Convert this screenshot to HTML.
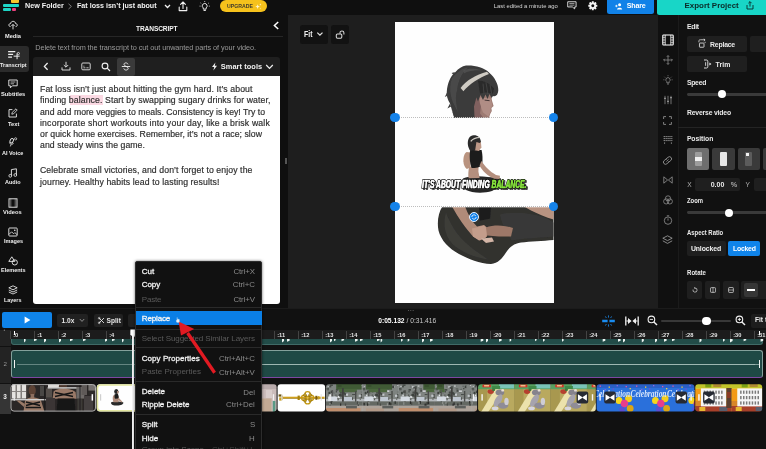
<!DOCTYPE html>
<html><head><meta charset="utf-8">
<style>
*{box-sizing:border-box;margin:0;padding:0}
html,body{width:766px;height:449px;overflow:hidden;background:#0f0f0f;font-family:"Liberation Sans",sans-serif;color:#fff}
.a{position:absolute}
.t{position:absolute;white-space:nowrap;line-height:1}
.b{font-weight:bold}
svg{position:absolute;overflow:visible}
/* sidebar */
.sl{position:absolute;left:0;width:33px;text-align:center;font-size:6.6px;font-weight:bold;color:#eee;line-height:1;letter-spacing:-0.1px}
/* menu */
.mi{position:absolute;left:142px;font-size:8.05px;color:#f2f2f2;line-height:1;white-space:nowrap}
.mk{position:absolute;font-size:7.9px;color:#8a8a8a;line-height:1;white-space:nowrap}
.mi{-webkit-text-stroke:0.28px #f2f2f2}
.dis{color:#5a5a5a;-webkit-text-stroke:0}
.sep{position:absolute;left:136px;width:125px;height:1px;background:#2a2a2a}
.btn{position:absolute;background:#1f1f1f;border-radius:2px}
.lab{position:absolute;font-size:6.8px;font-weight:bold;color:#eaeaea;line-height:1;white-space:nowrap}
</style></head><body>
<div id="root" style="position:absolute;left:0;top:0;width:766px;height:449px;overflow:hidden;will-change:transform">
<!-- TOPBAR -->
<div class="a" id="topbar" style="left:0;top:0;width:766px;height:15px;background:#0f0f0f"></div>

<!-- logo -->
<div class="a" style="left:10.5px;top:0;width:8.5px;height:3px;background:#f7c52b;border-radius:0 0 1px 1px"></div>
<div class="a" style="left:3px;top:4.4px;width:16.2px;height:2.9px;background:#1ed6c6;border-radius:1px"></div>
<div class="a" style="left:3px;top:8.4px;width:7.5px;height:2.4px;background:#1ed6c6;border-radius:1px"></div>
<div class="a" style="left:11.6px;top:8.4px;width:4.6px;height:2.4px;background:#f0407f;border-radius:1px"></div>
<div class="t b" id="nf" style="left:24.8px;top:1.7px;font-size:7.8px;color:#f3f3f3;transform-origin:0 0;transform:scaleX(0.921)">New Folder</div>
<svg style="left:67px;top:3px" width="6" height="7" viewBox="0 0 6 7"><path d="M1.5 0.8 L4.4 3.4 L1.5 6" fill="none" stroke="#8a8a8a" stroke-width="0.9"/></svg>
<div class="t b" id="ft" style="left:77.4px;top:1.7px;font-size:7.8px;color:#f3f3f3;transform-origin:0 0;transform:scaleX(0.914)">Fat loss isn’t just about</div>
<svg style="left:164.3px;top:4.2px" width="7" height="5" viewBox="0 0 7 5"><path d="M1 1 L3.5 3.5 L6 1" fill="none" stroke="#f0f0f0" stroke-width="1.3"/></svg>
<!-- upload icon -->
<svg style="left:178.4px;top:0.5px" width="10" height="12" viewBox="0 0 10 12"><path d="M5 7.5 V1.2 M2.6 3.4 L5 1 L7.4 3.4 M1.2 6 V9.6 H8.8 V6" fill="none" stroke="#f0f0f0" stroke-width="1.1" stroke-linejoin="round" stroke-linecap="round"/></svg>
<!-- bulb -->
<svg style="left:199px;top:0.8px" width="11.4" height="11.4" viewBox="0 0 12 12"><path d="M6 2.6 a2.6 2.6 0 0 1 1.5 4.7 V8.6 H4.5 V7.3 A2.6 2.6 0 0 1 6 2.6 Z M4.8 10 H7.2" fill="none" stroke="#f0f0f0" stroke-width="1"/><path d="M6 0 V1 M1.6 2 L2.4 2.7 M10.4 2 L9.6 2.7 M0.6 5.4 H1.6 M10.4 5.4 H11.4" stroke="#f0f0f0" stroke-width="0.8"/></svg>
<!-- upgrade -->
<div class="a" style="left:220px;top:0.3px;width:47.4px;height:11.8px;background:#f6c21c;border-radius:6px"></div>
<div class="t b" id="upg" style="left:227px;top:3.9px;font-size:5.2px;color:#3f3a2c;letter-spacing:0">UPGRADE</div>
<svg style="left:255.4px;top:3px" width="7" height="7" viewBox="0 0 9 9"><path d="M3.4 1.6 L4.2 3.8 L6.4 4.6 L4.2 5.4 L3.4 7.6 L2.6 5.4 L0.4 4.6 L2.6 3.8 Z" fill="#fff6d0"/><path d="M6.8 0.4 L7.2 1.5 L8.3 1.9 L7.2 2.3 L6.8 3.4 L6.4 2.3 L5.3 1.9 L6.4 1.5 Z" fill="#fff6d0"/><path d="M6.9 5.8 L7.2 6.6 L8 6.9 L7.2 7.2 L6.9 8 L6.6 7.2 L5.8 6.9 L6.6 6.6 Z" fill="#fff6d0"/></svg>
<!-- right side -->
<div class="t" id="le" style="left:493.8px;top:4.00px;font-size:5.85px;color:#d8d8d8">Last edited a minute ago</div>
<svg style="left:566.6px;top:1.4px" width="9.8" height="9" viewBox="0 0 11 10"><path d="M0.8 0.8 H10.2 V6.6 H8.6 V8.8 L6 6.6 H0.8 Z" fill="none" stroke="#e8e8e8" stroke-width="1"/><path d="M2.6 2.8 H8.4 M2.6 4.6 H8.4" stroke="#e8e8e8" stroke-width="0.7"/></svg>
<svg style="left:588.4px;top:1.3px" width="9.6" height="9.6" viewBox="-4.8 -4.8 9.6 9.6"><g fill="#f4f4f4"><circle r="3.3"/><rect x="-1" y="-4.5" width="2" height="9" rx="0.3"/><rect x="-1" y="-4.5" width="2" height="9" rx="0.3" transform="rotate(45)"/><rect x="-1" y="-4.5" width="2" height="9" rx="0.3" transform="rotate(90)"/><rect x="-1" y="-4.5" width="2" height="9" rx="0.3" transform="rotate(135)"/></g><circle r="1.5" fill="#0f0f0f"/></svg>
<div class="a" style="left:607px;top:-4px;width:47px;height:18.3px;background:#1182e8;border-radius:2.5px"></div>
<svg style="left:615px;top:3px" width="8" height="7" viewBox="0 0 8 7"><circle cx="4.6" cy="1.8" r="1.5" fill="#fff"/><path d="M2 6.4 C2 4.2 7.2 4.2 7.2 6.4 Z" fill="#fff"/><path d="M0.2 3 H2.6 M1.4 1.8 V4.2" stroke="#fff" stroke-width="0.8"/></svg>
<div class="t b" id="sh" style="left:626.8px;top:2.6px;font-size:7.1px;letter-spacing:-0.2px;color:#fff">Share</div>
<div class="a" style="left:657px;top:-4px;width:113px;height:18.5px;background:#18d6c7;border-radius:2.5px"></div>
<div class="t b" id="ex" style="left:684.5px;top:1.8px;font-size:7.95px;color:#0a2a28">Export Project</div>
<svg style="left:746px;top:1px" width="8" height="9" viewBox="0 0 8 9"><path d="M4 5.6 V0.8 M2.4 2.2 L4 0.6 L5.6 2.2 M1 4 V8 H7 V4" fill="none" stroke="#0a2a28" stroke-width="0.9"/></svg>
<!-- LEFT SIDEBAR -->
<div class="a" id="sidebar" style="left:0;top:15px;width:33px;height:293px;background:#0f0f0f"></div>

<div class="a" style="left:0;top:45.6px;width:29px;height:26px;background:#2b2b2b;border-radius:0 3px 3px 0"></div>
<div class="t b" id="s1" style="left:5.0px;top:33.15px;font-size:6.2px;color:#eee;transform-origin:0 0;transform:scaleX(0.909)">Media</div>
<div class="t b" id="s2" style="left:-0.3px;top:61.8px;font-size:6.2px;color:#eee;transform-origin:0 0;transform:scaleX(0.890)">Transcript</div>
<div class="t b" id="s3" style="left:0.8px;top:91.2px;font-size:6.2px;color:#eee;transform-origin:0 0;transform:scaleX(0.931)">Subtitles</div>
<div class="t b" id="s4" style="left:7.5px;top:121.10px;font-size:6.2px;color:#eee;transform-origin:0 0;transform:scaleX(0.919)">Text</div>
<div class="t b" id="s5" style="left:2.0px;top:149.8px;font-size:6.2px;color:#eee;transform-origin:0 0;transform:scaleX(0.888)">AI Voice</div>
<div class="t b" id="s6" style="left:5.0px;top:179.2px;font-size:6.2px;color:#eee;transform-origin:0 0;transform:scaleX(0.886)">Audio</div>
<div class="t b" id="s7" style="left:3.3px;top:208.6px;font-size:6.2px;color:#eee;transform-origin:0 0;transform:scaleX(0.926)">Videos</div>
<div class="t b" id="s8" style="left:3.5px;top:238px;font-size:6.2px;color:#eee;transform-origin:0 0;transform:scaleX(0.892)">Images</div>
<div class="t b" id="s9" style="left:0.5px;top:267.4px;font-size:6.2px;color:#eee;transform-origin:0 0;transform:scaleX(0.891)">Elements</div>
<div class="t b" id="s10" style="left:4.0px;top:296.8px;font-size:6.2px;color:#eee;transform-origin:0 0;transform:scaleX(0.875)">Layers</div>
<!-- sidebar icons -->
<svg style="left:8px;top:20px" width="10" height="10" viewBox="0 0 10 10"><path d="M2.6 6.6 C0.2 6.6 0.4 3.4 2.6 3.6 C2.8 0.6 7.4 0.6 7.6 3.6 C9.8 3.6 9.8 6.6 7.6 6.6 M5 9.4 V4.6 M3.4 6 L5 4.4 L6.6 6" fill="none" stroke="#eee" stroke-width="0.9"/></svg>
<svg style="left:7.4px;top:49.6px" width="14.4" height="11" viewBox="0 0 12 10"><path d="M0.5 1.5 H7 M0.5 4 H5 M0.5 6.5 H4" stroke="#eee" stroke-width="1"/><path d="M5.5 5.6 H11 M8.6 3.2 V8.4" stroke="#eee" stroke-width="0.9"/><circle cx="9.8" cy="3.2" r="1" fill="none" stroke="#eee" stroke-width="0.7"/></svg>
<svg style="left:8px;top:79px" width="10" height="10" viewBox="0 0 10 10"><path d="M0.8 1 H9.2 V6.8 H4.4 L2.4 8.8 V6.8 H0.8 Z" fill="none" stroke="#eee" stroke-width="0.9"/><path d="M2.6 3 H7.4 M2.6 4.8 H6" stroke="#eee" stroke-width="0.7"/></svg>
<svg style="left:8px;top:108px" width="10" height="10" viewBox="0 0 10 10"><path d="M4.4 1.6 H1 V9 H8.4 V5.6" fill="none" stroke="#eee" stroke-width="0.9"/><path d="M3.8 6.2 L4.2 4.4 L8 0.8 L9.2 2 L5.6 5.8 Z" fill="none" stroke="#eee" stroke-width="0.8"/></svg>
<svg style="left:8px;top:137px" width="10" height="10" viewBox="0 0 10 10"><rect x="2.2" y="1.4" width="3" height="4.6" rx="1.5" transform="rotate(25 3.7 3.7)" fill="none" stroke="#eee" stroke-width="0.9"/><path d="M1.4 5.4 C1.8 7.8 4.8 7.8 5.6 6 M3 7.6 L2.4 9.4" fill="none" stroke="#eee" stroke-width="0.8"/><circle cx="7.6" cy="1.8" r="1.1" fill="none" stroke="#eee" stroke-width="0.7"/></svg>
<svg style="left:8px;top:167.7px" width="10" height="10" viewBox="0 0 10 10"><path d="M3.4 7.6 V1.6 L8.4 0.8 V6.8" fill="none" stroke="#eee" stroke-width="0.9"/><circle cx="2.3" cy="7.8" r="1.4" fill="none" stroke="#eee" stroke-width="0.8"/><circle cx="7.3" cy="7" r="1.4" fill="none" stroke="#eee" stroke-width="0.8"/></svg>
<svg style="left:8px;top:197.5px" width="10" height="10" viewBox="0 0 10 10"><rect x="1" y="0.8" width="8" height="8.4" fill="none" stroke="#eee" stroke-width="0.9"/><path d="M2.8 0.8 V9.2 M7.2 0.8 V9.2" stroke="#eee" stroke-width="0.45"/></svg>
<svg style="left:8px;top:226.5px" width="10" height="10" viewBox="0 0 10 10"><rect x="0.8" y="1" width="8.4" height="8" rx="0.8" fill="none" stroke="#eee" stroke-width="0.9"/><path d="M1 7.4 L3.6 4.8 L5.6 6.8 L6.8 5.6 L9 7.6" fill="none" stroke="#eee" stroke-width="0.8"/><circle cx="6.8" cy="3.2" r="0.8" fill="#eee"/></svg>
<svg style="left:8px;top:255.5px" width="11" height="10" viewBox="0 0 11 10"><path d="M3.8 0.8 L6.8 5.4 H0.8 Z" fill="none" stroke="#eee" stroke-width="0.9" stroke-linejoin="round"/><circle cx="6.8" cy="6.4" r="2.6" fill="none" stroke="#eee" stroke-width="0.9"/></svg>
<svg style="left:8px;top:285px" width="10" height="10" viewBox="0 0 10 10"><path d="M5 0.8 L9.2 2.8 L5 4.8 L0.8 2.8 Z M0.8 5 L5 7 L9.2 5 M0.8 7 L5 9 L9.2 7" fill="none" stroke="#eee" stroke-width="0.85" stroke-linejoin="round"/></svg>
<!-- TRANSCRIPT PANEL -->
<div class="a" id="tpanel" style="left:33px;top:15px;width:255px;height:293px;background:#0f0f0f"></div>

<div class="t b" id="trh" style="left:136.0px;letter-spacing:-0.100px;top:26.20px;font-size:6.6px;color:#f2f2f2">TRANSCRIPT</div>
<svg style="left:272px;top:21px" width="8" height="9" viewBox="0 0 8 9"><path d="M6.2 1 L2.4 4.5 L6.2 8" fill="none" stroke="#fff" stroke-width="1.5"/></svg>
<div class="a" style="left:33px;top:35.8px;width:250px;height:1px;background:#262626"></div>
<div class="t" id="del" style="left:35.2px;letter-spacing:-0.065px;top:44px;font-size:7.3px;color:#9a9a9a">Delete text from the transcript to cut out unwanted parts of your video.</div>
<div class="a" style="left:33px;top:57px;width:247px;height:20px;background:#1f1f1f;border-radius:3px 3px 0 0"></div>
<div class="a" style="left:116.5px;top:58px;width:18.5px;height:17.5px;background:#3a3a3a;border-radius:2px"></div>
<svg style="left:43px;top:62px" width="6" height="9" viewBox="0 0 6 9"><path d="M4.6 1 L1.4 4.4 L4.6 7.8" fill="none" stroke="#f0f0f0" stroke-width="1.3"/></svg>
<svg style="left:61px;top:61px" width="10" height="10" viewBox="0 0 10 10"><path d="M5 0.8 V6 M2.8 4 L5 6.2 L7.2 4 M1 6.4 V9 H9 V6.4" fill="none" stroke="#e6e6e6" stroke-width="0.9"/></svg>
<svg style="left:81px;top:62px" width="10" height="9" viewBox="0 0 10 9"><rect x="0.8" y="1" width="8.4" height="6.8" rx="1" fill="none" stroke="#e6e6e6" stroke-width="0.9"/><path d="M2.4 5.8 H4.4 M5.4 5.8 H7.6 M2.4 4.2 H3.4" stroke="#e6e6e6" stroke-width="0.8"/></svg>
<svg style="left:101px;top:61.5px" width="10" height="10" viewBox="0 0 10 10"><circle cx="4" cy="4" r="2.9" fill="none" stroke="#f0f0f0" stroke-width="1.1"/><path d="M6.2 6.2 L9 9" stroke="#f0f0f0" stroke-width="1.2"/></svg>
<svg style="left:121px;top:62px" width="10" height="9" viewBox="0 0 10 9"><path d="M7 2.4 C6.6 0.4 3 0.4 3 2.4 C3 4.4 7.2 4.4 7.2 6.4 C7.2 8.6 3 8.6 2.8 6.4" fill="none" stroke="#f0f0f0" stroke-width="0.9"/><path d="M0.8 4.5 H9.2" stroke="#f0f0f0" stroke-width="0.9"/></svg>
<svg style="left:211px;top:62px" width="7" height="9" viewBox="0 0 7 9"><path d="M4.4 0.4 L1 5 H3.2 L2.4 8.6 L6 3.8 H3.8 Z" fill="#f0f0f0"/></svg>
<div class="t b" id="smt" style="left:220.8px;letter-spacing:0.068px;top:63.40px;font-size:7.4px;color:#f2f2f2">Smart tools</div>
<svg style="left:264.5px;top:63.5px" width="9" height="6" viewBox="0 0 9 6"><path d="M1.2 1 L4.5 4.4 L7.8 1" fill="none" stroke="#f0f0f0" stroke-width="1.2"/></svg>
<div class="a" style="left:33px;top:76px;width:247px;height:227.5px;background:#fff;border-radius:0 0 3px 3px"></div>
<div class="a" style="left:69.6px;top:94.7px;width:33px;height:10.7px;background:#fbd9e3"></div>
<div class="t" id="l1" style="left:40.0px;letter-spacing:0.095px;top:84.90px;font-size:8.7px;color:#2e2e2e;-webkit-text-stroke:0.18px #2e2e2e">Fat loss isn’t just about hitting the gym hard. It’s about</div>
<div class="t" id="l2" style="left:40.0px;letter-spacing:0.101px;top:96.20px;font-size:8.7px;color:#2e2e2e;-webkit-text-stroke:0.18px #2e2e2e">finding balance. Start by swapping sugary drinks for water,</div>
<div class="t" id="l3" style="left:40.0px;letter-spacing:0.008px;top:107.50px;font-size:8.7px;color:#2e2e2e;-webkit-text-stroke:0.18px #2e2e2e">and add more veggies to meals. Consistency is key! Try to</div>
<div class="t" id="l4" style="left:40.0px;letter-spacing:0.177px;top:118.80px;font-size:8.7px;color:#2e2e2e;-webkit-text-stroke:0.18px #2e2e2e">incorporate short workouts into your day, like a brisk walk</div>
<div class="t" id="l5" style="left:40.0px;letter-spacing:0.044px;top:130.10px;font-size:8.7px;color:#2e2e2e;-webkit-text-stroke:0.18px #2e2e2e">or quick home exercises. Remember, it’s not a race; slow</div>
<div class="t" id="l6" style="left:40.0px;letter-spacing:0.066px;top:141.40px;font-size:8.7px;color:#2e2e2e;-webkit-text-stroke:0.18px #2e2e2e">and steady wins the game.</div>
<div class="t" id="l7" style="left:40.0px;letter-spacing:0.095px;top:166.00px;font-size:8.7px;color:#2e2e2e;-webkit-text-stroke:0.18px #2e2e2e">Celebrate small victories, and don’t forget to enjoy the</div>
<div class="t" id="l8" style="left:40.0px;letter-spacing:0.111px;top:177.60px;font-size:8.7px;color:#2e2e2e;-webkit-text-stroke:0.18px #2e2e2e">journey. Healthy habits lead to lasting results!</div>

<!-- resizer -->
<div class="a" style="left:284.5px;top:158px;width:1px;height:6px;background:#555"></div>
<div class="a" style="left:286px;top:158px;width:1px;height:6px;background:#555"></div>
<!-- CANVAS AREA -->
<div class="a" id="canvasbg" style="left:288px;top:15.4px;width:370px;height:292.6px;background:#1e1e1e"></div>

<div class="a" style="left:299.5px;top:25px;width:28.5px;height:18.5px;background:#121212;border-radius:2.5px"></div>
<div class="t b" id="fit" style="left:303.9px;top:29.6px;font-size:8.7px;color:#f2f2f2;transform-origin:0 0;transform:scaleX(0.8)">Fit</div>
<svg style="left:316px;top:31px" width="8" height="6" viewBox="0 0 8 6"><path d="M1.3 1.6 L3.9 4.2 L6.5 1.6" fill="none" stroke="#e4e4e4" stroke-width="1.25"/></svg>
<div class="a" style="left:330.8px;top:25px;width:18.7px;height:18.5px;background:#121212;border-radius:2.5px"></div>
<svg style="left:335px;top:29px" width="11" height="11" viewBox="335 29 11 11"><rect x="336.3" y="33.9" width="5.5" height="4.3" rx="1.1" fill="none" stroke="#d8d8d8" stroke-width="1.05"/><path d="M340 33.8 V32.6 C340 30.5 343.9 30.5 343.9 32.7 V34.4" fill="none" stroke="#d8d8d8" stroke-width="1.05"/></svg>
<!-- white canvas -->
<div class="a" id="cv" style="left:395px;top:21.5px;width:158.5px;height:281px;background:#fefefe;overflow:hidden">
<svg style="left:0;top:0" width="158.5" height="281" viewBox="395 21.5 158.5 281">
<defs><filter id="bl1" x="-20%" y="-20%" width="140%" height="140%"><feGaussianBlur stdDeviation="0.7"/></filter><filter id="bl2" x="-20%" y="-20%" width="140%" height="140%"><feGaussianBlur stdDeviation="0.45"/></filter></defs>
<g id="bigfig" filter="url(#bl1)">
<!-- face -->
<path d="M471 88 L491.4 93 L491.8 99.4 L493.6 105.4 L491.4 107.4 L491.8 110.6 L490.2 113.6 L488.8 118 L468 118 Z" fill="#9d7a72"/>
<path d="M480 97 L490.6 98 L492.4 105 L490.6 108 L490.8 111 L488.4 116 L483 112 L480 104 Z" fill="#b08d85"/>
<path d="M470 100 L478 97 L481 106 L480 113 L484 118 L468 118 Z" fill="#77595a" opacity="0.75"/>
<path d="M484.6 99.6 L489.6 100.2" stroke="#3a2c2c" stroke-width="0.9"/>
<!-- hair -->
<path d="M466 65 C474 64.5 484 66.5 489 72 C495 77 498.5 84 498.3 90 C498 94 496 96.5 493 95.5 L491.5 97.5 L489.5 93.5 L487.5 98.5 L485.5 94 L483 99.5 L480.5 94.5 L478 101 L476.4 97 L474 106 L474.6 118 L454.5 118 C453 112 451 107 450 103 C447.5 99 446.3 95 446.8 91 C447.5 83 450 76 455.5 71.5 C458.5 68 462 65.8 466 65 Z" fill="#3b3b3b"/>
<path d="M452 78 C456 72 462 68 468 67 C462 72 458 80 457 90 C455 96 456 104 458 112 L454 104 C450 96 449 86 452 78 Z" fill="#555" opacity="0.55"/>
<path d="M478 80 C484 80 490 83 494 88 L493 93 L486 92 L480 93 Z" fill="#2a2a2a"/>
<path d="M450 103 L447.4 108 L451 106 L452.6 113 L455 108 L456 118 L454.5 118 Z" fill="#3b3b3b"/><path d="M447 92 L444.8 96.4 L448 95 Z M455 71.6 L451.6 72.6 L453.6 74.6 Z" fill="#444"/><path d="M463 70 C468 67.5 476 67.5 482 70 C476 69.4 468 70.4 464 73 Z" fill="#565656" opacity="0.7"/><path d="M486 82 L488 94 M483 83 L484 93 M490 84 L491.6 93" stroke="#555" stroke-width="0.7" opacity="0.8"/>
<!-- headband -->
<path d="M460.6 87.5 C466 80 476 74 487 71.2 L489 73.6 C479 77.5 469.6 83.4 463.4 90.8 Z" fill="#cfcbc3"/>
<!-- legs -->
<path d="M442.4 206 L553.5 206 L553.5 239.5 C543 240.5 530 241 521 242 C514 243 510 246 506 252 C502 258 498 263 491 263.5 C480 263.5 468 258 459 253.5 C449 248 441 240 438.5 230 C436.8 221 438.5 212 442.4 206 Z" fill="#30302e"/>
<path d="M446 212 C443 222 444 234 452 243 C460 251 474 257 488 259 C478 252 466 244 458 234 C452 226 448 218 446 212 Z" fill="#454541" opacity="0.6"/>
<path d="M500 214 C512 211 530 212 545 217 L553.5 222 L553.5 236 C540 237 522 238 512 240 C506 233 502 224 500 214 Z" fill="#3c3c39" opacity="0.8"/>
<!-- waist -->
<path d="M479 206 L491 206 L490 218 L480 220 Z" fill="#1c1c1c"/>
<!-- left arm -->
<path d="M452 206 L465 206 C468 214 472 221 477 226 L484 224.5 L488 228 L487 236 L480 240 L473 236 C466 228 458 217 452 206 Z" fill="#b08b79"/>
<path d="M472 228 L484 225 L488 229 L486 237 L479 240 L473 236 Z" fill="#c39d8b"/>
<!-- foot -->
<path d="M486 227 C494 224 504 224.5 513 227.5 L511 236 C503 236 494 236 487 235 Z" fill="#9d7867"/>
<path d="M481 238 L492 237 L494 241 L486 242.5 Z" fill="#d3b5a6"/>
<!-- right arm -->
<path d="M524 206 L553.5 206 L553.5 219 C546 217 538 213 531 210 Z" fill="#b89381"/>
</g>
<rect x="395" y="117.4" width="158.5" height="89.4" fill="#fefefe"/>
<g id="smallfig" filter="url(#bl2)">
<path d="M463 178 C468 175.6 478 175 488 176.4 L500.6 177.6 C501.4 182 498.6 187.4 492 190.6 C484 193 471.6 192.6 466 189.6 C461.8 186.4 461.4 181.6 463 178 Z" fill="#262626"/>
<path d="M469.2 166 L478.6 166 L478.4 171 L479.6 177.4 L468.6 177.8 C468 174 468.4 170 469.2 166 Z" fill="#b48f7e"/>
<path d="M466.6 151.4 C464 153 463.2 157 463.4 161 C463.6 164.4 465 167 466.8 168.4 L470.4 167 L470.6 152 Z" fill="#b9937f"/>
<path d="M470.2 149.6 L481.6 149.6 C482.6 154 482.8 159 482.2 163.4 C481 166.2 477.6 167.6 471.6 167.4 C469.6 162.6 469.2 155 470.2 149.6 Z" fill="#1f1f1f"/>
<path d="M481.4 160.6 C485 166 490 171.4 496 174.4 L500 175.2 L499.6 178.4 L494.4 178.2 C487.6 175.6 482 170 479.6 165 Z" fill="#b48f7e"/>
<path d="M474.6 140.6 L480.8 140.8 L481.4 146.8 L479 150.4 L474.6 149.8 Z" fill="#bd9887"/>
<path d="M473.5 134.8 C477.5 134.5 480.8 137 480.9 141.5 L479.6 142.6 L476.4 141.6 L475.2 149.6 L470.5 150.6 C467.8 147 466.8 141.5 469 137.5 C470.2 135.8 471.8 135 473.5 134.8 Z" fill="#2a2a2a"/>
<path d="M470.4 140.2 C472.6 137.6 476 136.2 479.6 136.4 L480 137.6 C476.6 137.6 473.4 138.8 471 141.4 Z" fill="#cfcbc3"/>
</g>
</svg>
</div>
<!-- selection box -->
<div class="a" style="left:395px;top:117px;width:158.5px;height:0;border-top:1px dotted #bdbdbd"></div>
<div class="a" style="left:395px;top:206.3px;width:158.5px;height:0;border-top:1px dotted #bdbdbd"></div>
<div class="a" style="left:390.4px;top:112.8px;width:9.2px;height:9.2px;border-radius:50%;background:#1583ea"></div>
<div class="a" style="left:548.9px;top:112.8px;width:9.2px;height:9.2px;border-radius:50%;background:#1583ea"></div>
<div class="a" style="left:390.4px;top:202.1px;width:9.2px;height:9.2px;border-radius:50%;background:#1583ea"></div>
<div class="a" style="left:548.9px;top:202.1px;width:9.2px;height:9.2px;border-radius:50%;background:#1583ea"></div>
<div class="a" style="left:468.9px;top:212.2px;width:10.2px;height:10.2px;border-radius:50%;background:#1583ea;border:1px solid #e8f2ff"></div>
<svg style="left:471px;top:214.3px" width="6" height="6" viewBox="0 0 6 6"><path d="M0.8 3 A2.2 2.2 0 0 1 4.8 1.8 M5.2 3 A2.2 2.2 0 0 1 1.2 4.2" fill="none" stroke="#fff" stroke-width="0.8"/></svg>
<!-- caption -->
<svg id="cap" style="left:415px;top:170px" width="120" height="30" viewBox="415 170 120 30" font-family="Liberation Sans, sans-serif" font-weight="bold" font-style="italic" font-size="10.4">
<text x="423.4" y="189.2" textLength="104.5" lengthAdjust="spacingAndGlyphs" fill="#2a2a2a" stroke="#2a2a2a" stroke-width="2" stroke-linejoin="round" opacity="0.85">IT’S ABOUT FINDING BALANCE.</text>
<text x="422" y="188" textLength="104.5" lengthAdjust="spacingAndGlyphs" fill="#fff" stroke="#0c0c0c" stroke-width="2.2" stroke-linejoin="round" paint-order="stroke">IT’S ABOUT FINDING <tspan fill="#86e23c">BALANCE.</tspan></text>
<text x="422" y="188" textLength="104.5" lengthAdjust="spacingAndGlyphs" fill="#fff" stroke="#fff" stroke-width="0.35">IT’S ABOUT FINDING <tspan fill="#86e23c" stroke="#86e23c">BALANCE.</tspan></text>
</svg>
<!-- RIGHT ICON COLUMN -->
<div class="a" id="ricons" style="left:658px;top:15px;width:20px;height:293px;background:#101010"></div>

<!-- right icon column icons -->
<svg style="left:661.5px;top:34px" width="12" height="12" viewBox="0 0 12 12"><rect x="0.8" y="1" width="10.4" height="10" rx="0.8" fill="none" stroke="#fff" stroke-width="1.1"/><path d="M3.2 1 V11 M8.8 1 V11" stroke="#fff" stroke-width="0.8"/><path d="M0.8 3.4 H3.2 M0.8 6 H3.2 M0.8 8.6 H3.2 M8.8 3.4 H11.2 M8.8 6 H11.2 M8.8 8.6 H11.2" stroke="#fff" stroke-width="0.6"/></svg>
<svg style="left:662.5px;top:55px" width="10" height="10" viewBox="0 0 10 10"><path d="M5 0.6 V9.4 M0.6 5 H9.4 M3.8 1.8 L5 0.6 L6.2 1.8 M3.8 8.2 L5 9.4 L6.2 8.2 M1.8 3.8 L0.6 5 L1.8 6.2 M8.2 3.8 L9.4 5 L8.2 6.2" fill="none" stroke="#8c8c8c" stroke-width="0.8"/></svg>
<svg style="left:662.5px;top:75px" width="10" height="10" viewBox="0 0 10 10"><path d="M5 2.6 a2.2 2.2 0 0 1 1.2 4 V7.8 H3.8 V6.6 A2.2 2.2 0 0 1 5 2.6 Z M4 9 H6" fill="none" stroke="#8c8c8c" stroke-width="0.8"/><path d="M5 0.2 V1.2 M1.4 1.8 L2.1 2.5 M8.6 1.8 L7.9 2.5 M0.4 4.8 H1.4 M8.6 4.8 H9.6" stroke="#8c8c8c" stroke-width="0.7"/></svg>
<svg style="left:662.5px;top:95px" width="10" height="10" viewBox="0 0 10 10"><path d="M2 0.8 V9.2 M5 0.8 V9.2 M8 0.8 V9.2" stroke="#8c8c8c" stroke-width="0.8"/><path d="M1 3.4 H3 M4 6.4 H6 M7 2.6 H9" stroke="#8c8c8c" stroke-width="1.2"/></svg>
<svg style="left:663px;top:115.5px" width="9" height="9" viewBox="0 0 9 9"><path d="M0.6 3 V0.6 H3 M6 0.6 H8.4 V3 M8.4 6 V8.4 H6 M3 8.4 H0.6 V6" fill="none" stroke="#8c8c8c" stroke-width="0.9"/></svg>
<svg style="left:662.5px;top:135px" width="10" height="10" viewBox="0 0 10 10"><path d="M0.6 1.6 H9.4 M0.6 3.6 H9.4 M0.6 5.6 H9.4 M1.6 7.4 V9 M8.4 7.4 V9" stroke="#8c8c8c" stroke-width="1" stroke-dasharray="1.4 0.5"/></svg>
<svg style="left:662px;top:154.5px" width="11" height="11" viewBox="0 0 11 11"><rect x="0.8" y="3.4" width="9.4" height="4.2" rx="2.1" transform="rotate(-40 5.5 5.5)" fill="none" stroke="#8c8c8c" stroke-width="0.9"/><path d="M4.2 4.2 L6.8 6.8 M4.2 6.8 L6.8 4.2" stroke="#8c8c8c" stroke-width="0.6"/></svg>
<svg style="left:662.5px;top:175px" width="10" height="10" viewBox="0 0 10 10"><path d="M0.8 1.8 L4.6 5 L0.8 8.2 Z M9.2 1.8 L5.4 5 L9.2 8.2 Z" fill="none" stroke="#8c8c8c" stroke-width="0.85" stroke-linejoin="round"/></svg>
<svg style="left:662.5px;top:194.5px" width="10" height="10" viewBox="0 0 10 10"><circle cx="5" cy="3.4" r="2.6" fill="none" stroke="#8c8c8c" stroke-width="0.8"/><circle cx="3.2" cy="6.4" r="2.6" fill="none" stroke="#8c8c8c" stroke-width="0.8"/><circle cx="6.8" cy="6.4" r="2.6" fill="none" stroke="#8c8c8c" stroke-width="0.8"/></svg>
<svg style="left:662.5px;top:214.5px" width="10" height="10" viewBox="0 0 10 10"><circle cx="5" cy="5.6" r="3.7" fill="none" stroke="#8c8c8c" stroke-width="0.85"/><path d="M5 5.6 V3.4 M3.8 0.8 H6.2" stroke="#8c8c8c" stroke-width="0.85"/></svg>
<svg style="left:662px;top:234.5px" width="11" height="10" viewBox="0 0 11 10"><path d="M5.5 0.8 L10.2 3.2 L5.5 5.6 L0.8 3.2 Z M0.8 5.8 L5.5 8.4 L10.2 5.8" fill="none" stroke="#9a9a9a" stroke-width="0.85" stroke-linejoin="round"/></svg>
<!-- RIGHT PANEL -->
<div class="a" id="rpanel" style="left:678px;top:15px;width:88px;height:293px;background:#111;border-left:1px solid #1b1b1b"></div>

<div class="lab" id="r1" style="left:686.9px;letter-spacing:-0.211px;top:23.90px">Edit</div>
<div class="btn" style="left:687px;top:36.2px;width:60px;height:16px"></div>
<div class="btn" style="left:750px;top:36.2px;width:20px;height:16px"></div>
<svg style="left:697.6px;top:39.4px" width="8.2" height="9.2" viewBox="0 0 9 10"><rect x="1.6" y="4.4" width="5" height="4.6" rx="0.6" fill="none" stroke="#eee" stroke-width="0.9"/><path d="M1 3.6 V2 C1 0.8 2 0.8 3 0.8 H7.6 M6.4 -0.2 L7.8 0.9 L6.4 2.2 M7.8 3 V4.4" fill="none" stroke="#eee" stroke-width="0.8"/></svg>
<div class="lab" id="r2" style="left:710.1px;letter-spacing:-0.220px;top:42.10px;font-size:6.9px">Replace</div>
<div class="btn" style="left:687px;top:56.2px;width:60px;height:16px"></div>
<svg style="left:703px;top:59.4px" width="9" height="10" viewBox="0 0 9 10"><path d="M1 1 H3.4 C4.4 1 4.8 1.6 4.8 2.4 V7.6 C4.8 8.4 4.4 9 3.4 9 H1" fill="none" stroke="#eee" stroke-width="0.9"/><path d="M2.6 3.2 V6.8" stroke="#eee" stroke-width="0.8"/><path d="M6.4 3.4 L8.4 5 L6.4 6.6 Z" fill="#eee"/></svg>
<div class="lab" id="r3" style="left:715.5px;letter-spacing:0.084px;top:62.10px;font-size:6.9px">Trim</div>
<div class="lab" id="r4" style="left:686.9px;letter-spacing:-0.241px;top:79.90px">Speed</div>
<div class="a" style="left:687px;top:92.9px;width:80px;height:2.8px;background:#3a3a3a;border-radius:1.4px"></div>
<div class="a" style="left:717.9px;top:90.2px;width:8px;height:8px;border-radius:50%;background:#fff"></div>
<div class="lab" id="r5" style="left:686.9px;letter-spacing:-0.155px;top:109.80px">Reverse video</div>
<div class="a" style="left:678px;top:126.5px;width:88px;height:1px;background:#242424"></div>
<div class="lab" id="r6" style="left:686.9px;letter-spacing:-0.052px;top:135.90px">Position</div>
<div class="btn" style="left:687px;top:148px;width:22.2px;height:22px;background:#6e6e6e"></div>
<div class="a" style="left:694.6px;top:151.8px;width:7px;height:14.4px;background:#9c9c9c;border-radius:1px"></div>
<div class="a" style="left:694.6px;top:156.6px;width:7px;height:4.6px;background:#f0f0f0"></div>
<div class="btn" style="left:712.2px;top:148px;width:22.5px;height:22px;background:#3a3a3a"></div>
<div class="a" style="left:720px;top:152px;width:7px;height:14px;background:#e8e8e8;border-radius:1px"></div>
<div class="btn" style="left:737.6px;top:148px;width:22.5px;height:22px;background:#3a3a3a"></div>
<div class="a" style="left:745.2px;top:152px;width:7px;height:14px;background:#5c5c5c;border-radius:1px"></div>
<div class="a" style="left:746px;top:153.4px;width:3px;height:3px;background:#f0f0f0"></div>
<div class="btn" style="left:763px;top:148px;width:10px;height:22px;background:#3a3a3a"></div>
<div class="lab" id="r7" style="left:687.2px;letter-spacing:-0.706px;top:181.50px;font-size:6.6px;font-weight:normal;color:#b0b0b0">X</div>
<div class="btn" style="left:695px;top:177.5px;width:44.6px;height:13.4px;background:#1f1f1f"></div>
<div class="lab" id="r8" style="left:710.7px;letter-spacing:-0.006px;top:180.6px;font-size:7px">0.00</div>
<div class="lab" id="r9" style="left:730.8px;letter-spacing:-0.006px;top:180.7px;font-size:7.2px;font-weight:bold;color:#a8a8a8">%</div>
<div class="lab" id="r10" style="left:745.4px;letter-spacing:-0.906px;top:181.50px;font-size:6.6px;font-weight:normal;color:#b0b0b0">Y</div>
<div class="btn" style="left:754px;top:177.5px;width:20px;height:13.4px;background:#1f1f1f"></div>
<div class="lab" id="r11" style="left:686.9px;top:198.00px;transform-origin:0 0;transform:scaleX(0.865)">Zoom</div>
<div class="a" style="left:687px;top:211.4px;width:80px;height:2.8px;background:#3a3a3a;border-radius:1.4px"></div>
<div class="a" style="left:725.4px;top:208.8px;width:8px;height:8px;border-radius:50%;background:#fff"></div>
<div class="lab" id="r12" style="left:686.9px;top:230.20px;transform-origin:0 0;transform:scaleX(0.870)">Aspect Ratio</div>
<div class="btn" style="left:687px;top:241px;width:39.3px;height:15.4px"></div>
<div class="lab" id="r13" style="left:690.9px;letter-spacing:-0.102px;top:246.20px;font-size:6.9px;font-weight:bold;color:#f0f0f0">Unlocked</div>
<div class="btn" style="left:728.2px;top:241px;width:32.2px;height:15.4px;background:#0f84ea"></div>
<div class="lab" id="r14" style="left:733.1px;letter-spacing:-0.271px;top:246.20px;font-size:6.9px;font-weight:bold;color:#fff">Locked</div>
<div class="lab" id="r15" style="left:686.9px;top:269.60px;transform-origin:0 0;transform:scaleX(0.896)">Rotate</div>
<div class="btn" style="left:687px;top:280.8px;width:15.4px;height:18px"></div>
<div class="btn" style="left:705px;top:280.8px;width:15.4px;height:18px"></div>
<div class="btn" style="left:723px;top:280.8px;width:15.6px;height:18px"></div>
<div class="btn" style="left:741px;top:280.8px;width:30px;height:18px"></div>
<div class="a" style="left:744px;top:283.2px;width:14px;height:13.4px;background:#363636;border-radius:2px"></div>
<div class="a" style="left:746.8px;top:289px;width:8.4px;height:1.8px;background:#fff"></div>
<svg style="left:691.8px;top:286.8px" width="6" height="6" viewBox="0 0 7 7"><path d="M3.5 1.2 A2.4 2.4 0 1 1 1.2 3" fill="none" stroke="#ddd" stroke-width="0.8"/><path d="M2.4 0.2 L3.8 1.2 L2.6 2.4" fill="none" stroke="#ddd" stroke-width="0.7"/></svg>
<svg style="left:709.7px;top:286.8px" width="6" height="6" viewBox="0 0 7 7"><rect x="0.6" y="0.8" width="5.8" height="5.4" rx="0.6" fill="none" stroke="#ddd" stroke-width="0.8"/><path d="M3.5 0 V7" stroke="#ddd" stroke-width="0.7"/></svg>
<svg style="left:727.8px;top:286.8px" width="6" height="6" viewBox="0 0 7 7"><rect x="0.8" y="0.6" width="5.4" height="5.8" rx="0.6" fill="none" stroke="#ddd" stroke-width="0.8"/><path d="M0 3.5 H7" stroke="#ddd" stroke-width="0.7"/></svg>
<!-- TIMELINE -->
<div class="a" id="timeline" style="left:0;top:308px;width:766px;height:141px;background:#111;border-top:1px solid #1b1b1b"></div>

<div class="a" style="left:407.6px;top:309.6px;width:1.3px;height:1.3px;background:#6e6e6e;border-radius:50%;box-shadow:2.3px 0 #6e6e6e,4.6px 0 #6e6e6e"></div>
<!-- toolbar -->
<div class="a" style="left:2.3px;top:312px;width:49.5px;height:16.4px;background:#0f84ea;border-radius:2px"></div>
<svg style="left:24px;top:316.4px" width="7" height="8" viewBox="0 0 7 8"><path d="M0.6 0.4 L6.4 4 L0.6 7.6 Z" fill="#fff"/></svg>
<div class="btn" style="left:57.4px;top:314.2px;width:30.8px;height:13px;background:#212121"></div>
<div class="t b" id="spd" style="left:61.6px;top:318.40px;font-size:6.6px;color:#e6e6e6">1.0x</div>
<svg style="left:78.6px;top:318.4px" width="6" height="5" viewBox="0 0 6 5"><path d="M0.8 1 L3 3.4 L5.2 1" fill="none" stroke="#aaa" stroke-width="0.8"/></svg>
<div class="btn" style="left:94px;top:314.2px;width:28.6px;height:13px;background:#212121"></div>
<svg style="left:97.6px;top:317.2px" width="7" height="7" viewBox="0 0 7 7"><path d="M1 1 L6 6 M6 1 L1 6" stroke="#e6e6e6" stroke-width="0.9"/><circle cx="1.2" cy="1.2" r="0.9" fill="none" stroke="#e6e6e6" stroke-width="0.6"/><circle cx="1.2" cy="5.8" r="0.9" fill="none" stroke="#e6e6e6" stroke-width="0.6"/></svg>
<div class="t b" id="spl" style="left:106.6px;top:318.40px;font-size:6.6px;color:#e6e6e6">Split</div>
<div class="btn" style="left:128px;top:314.2px;width:28px;height:13px;background:#212121"></div>
<div class="t b" id="tm1" style="left:378.2px;top:317.6px;font-size:6.7px;color:#fff">0:05.132</div>
<div class="t" id="tm2" style="left:406.5px;top:317.6px;font-size:6.7px;color:#c8c8c8">/ 0:31.416</div>
<!-- snap icon -->
<svg style="left:601.5px;top:315px" width="13" height="12" viewBox="0 0 13 12"><path d="M0.2 6 H5.6 M7.4 6 H12.8" stroke="#1a8cf0" stroke-width="2.4"/><path d="M6.5 0.4 V2.6 M6.5 9.4 V11.6 M3.4 1.4 L4.4 3 M9.6 1.4 L8.6 3 M3.4 10.6 L4.4 9 M9.6 10.6 L8.6 9" stroke="#1a8cf0" stroke-width="0.8"/></svg>
<svg style="left:624.5px;top:316px" width="14" height="10" viewBox="0 0 14 10"><path d="M0.8 0.6 V9.4 M13.2 0.6 V9.4" stroke="#f0f0f0" stroke-width="1.3"/><path d="M1.4 5 H4 M10 5 H12.6" stroke="#f0f0f0" stroke-width="1.1"/><path d="M3 2 L6.6 5 L3 8 Z M11 2 L7.4 5 L11 8 Z" fill="#f0f0f0"/></svg>
<svg style="left:647.4px;top:315.4px" width="11" height="11" viewBox="0 0 11 11"><circle cx="4.4" cy="4.4" r="3.3" fill="none" stroke="#f0f0f0" stroke-width="1.1"/><path d="M6.9 6.9 L10 10" stroke="#f0f0f0" stroke-width="1.4"/><path d="M2.8 4.4 H6" stroke="#f0f0f0" stroke-width="0.9"/></svg>
<div class="a" style="left:660.5px;top:319.5px;width:70.5px;height:2.8px;background:#383838;border-radius:1.4px"></div>
<div class="a" style="left:702.2px;top:316.6px;width:8.6px;height:8.6px;border-radius:50%;background:#fff"></div>
<svg style="left:735.4px;top:315.4px" width="11" height="11" viewBox="0 0 11 11"><circle cx="4.4" cy="4.4" r="3.3" fill="none" stroke="#f0f0f0" stroke-width="1.1"/><path d="M6.9 6.9 L10 10" stroke="#f0f0f0" stroke-width="1.4"/><path d="M2.8 4.4 H6 M4.4 2.8 V6" stroke="#f0f0f0" stroke-width="0.9"/></svg>
<div class="btn" style="left:751px;top:313.6px;width:20px;height:14px;background:#1d1d1d"></div>
<div class="t b" id="fitt" style="left:755px;top:317.4px;font-size:6.6px;color:#eee">Fit t</div>
<!-- track column -->
<div class="a" style="left:0;top:330px;width:10.5px;height:16px;background:#232323"></div>
<div class="a" style="left:0;top:347px;width:10.5px;height:36px;background:#232323"></div>
<div class="a" style="left:0;top:384px;width:10.5px;height:29.5px;background:#353535"></div>
<div class="t" style="left:3.4px;top:361.2px;font-size:6.2px;color:#999">2</div>
<div class="t b" style="left:3.2px;top:394.2px;font-size:6.4px;color:#eee">3</div>
<div class="t" style="left:3.6px;top:328.4px;font-size:5px;color:#777">•</div>
<!-- ruler bg -->
<div class="a" style="left:10.5px;top:330px;width:755.5px;height:8px;background:#1f1f1f"></div>
<!-- track1 -->
<div class="a" style="left:10.8px;top:336px;width:752.4px;height:9px;background:#224c48;border:1px solid #3f6a66;border-top:none;border-radius:0 0 3px 3px"></div>
<div class="a" style="left:10.5px;top:330px;width:755.5px;height:8.6px;background:#1c1c1c"></div>
<div class="a" style="left:10.3px;top:330.6px;width:1px;height:8px;background:#444"></div><div class="t" style="left:13.2px;top:332.8px;font-size:5.7px;font-weight:bold;color:#e4e4e4">:0</div>
<div class="a" style="left:34.3px;top:330.6px;width:1px;height:8px;background:#444"></div><div class="t" style="left:37.2px;top:332.8px;font-size:5.7px;font-weight:bold;color:#e4e4e4">:1</div>
<div class="a" style="left:58.3px;top:330.6px;width:1px;height:8px;background:#444"></div><div class="t" style="left:61.2px;top:332.8px;font-size:5.7px;font-weight:bold;color:#e4e4e4">:2</div>
<div class="a" style="left:82.3px;top:330.6px;width:1px;height:8px;background:#444"></div><div class="t" style="left:85.2px;top:332.8px;font-size:5.7px;font-weight:bold;color:#e4e4e4">:3</div>
<div class="a" style="left:106.3px;top:330.6px;width:1px;height:8px;background:#444"></div><div class="t" style="left:109.2px;top:332.8px;font-size:5.7px;font-weight:bold;color:#e4e4e4">:4</div>
<div class="a" style="left:130.3px;top:330.6px;width:1px;height:8px;background:#444"></div><div class="t" style="left:133.2px;top:332.8px;font-size:5.7px;font-weight:bold;color:#e4e4e4">:5</div>
<div class="a" style="left:154.3px;top:330.6px;width:1px;height:8px;background:#444"></div><div class="t" style="left:157.2px;top:332.8px;font-size:5.7px;font-weight:bold;color:#e4e4e4">:6</div>
<div class="a" style="left:178.3px;top:330.6px;width:1px;height:8px;background:#444"></div><div class="t" style="left:181.2px;top:332.8px;font-size:5.7px;font-weight:bold;color:#e4e4e4">:7</div>
<div class="a" style="left:202.3px;top:330.6px;width:1px;height:8px;background:#444"></div><div class="t" style="left:205.2px;top:332.8px;font-size:5.7px;font-weight:bold;color:#e4e4e4">:8</div>
<div class="a" style="left:226.3px;top:330.6px;width:1px;height:8px;background:#444"></div><div class="t" style="left:229.2px;top:332.8px;font-size:5.7px;font-weight:bold;color:#e4e4e4">:9</div>
<div class="a" style="left:250.3px;top:330.6px;width:1px;height:8px;background:#444"></div><div class="t" style="left:253.2px;top:332.8px;font-size:5.7px;font-weight:bold;color:#e4e4e4">:10</div>
<div class="a" style="left:274.3px;top:330.6px;width:1px;height:8px;background:#444"></div><div class="t" style="left:277.2px;top:332.8px;font-size:5.7px;font-weight:bold;color:#e4e4e4">:11</div>
<div class="a" style="left:298.3px;top:330.6px;width:1px;height:8px;background:#444"></div><div class="t" style="left:301.2px;top:332.8px;font-size:5.7px;font-weight:bold;color:#e4e4e4">:12</div>
<div class="a" style="left:322.3px;top:330.6px;width:1px;height:8px;background:#444"></div><div class="t" style="left:325.2px;top:332.8px;font-size:5.7px;font-weight:bold;color:#e4e4e4">:13</div>
<div class="a" style="left:346.3px;top:330.6px;width:1px;height:8px;background:#444"></div><div class="t" style="left:349.2px;top:332.8px;font-size:5.7px;font-weight:bold;color:#e4e4e4">:14</div>
<div class="a" style="left:370.3px;top:330.6px;width:1px;height:8px;background:#444"></div><div class="t" style="left:373.2px;top:332.8px;font-size:5.7px;font-weight:bold;color:#e4e4e4">:15</div>
<div class="a" style="left:394.3px;top:330.6px;width:1px;height:8px;background:#444"></div><div class="t" style="left:397.2px;top:332.8px;font-size:5.7px;font-weight:bold;color:#e4e4e4">:16</div>
<div class="a" style="left:418.3px;top:330.6px;width:1px;height:8px;background:#444"></div><div class="t" style="left:421.2px;top:332.8px;font-size:5.7px;font-weight:bold;color:#e4e4e4">:17</div>
<div class="a" style="left:442.3px;top:330.6px;width:1px;height:8px;background:#444"></div><div class="t" style="left:445.2px;top:332.8px;font-size:5.7px;font-weight:bold;color:#e4e4e4">:18</div>
<div class="a" style="left:466.3px;top:330.6px;width:1px;height:8px;background:#444"></div><div class="t" style="left:469.2px;top:332.8px;font-size:5.7px;font-weight:bold;color:#e4e4e4">:19</div>
<div class="a" style="left:490.3px;top:330.6px;width:1px;height:8px;background:#444"></div><div class="t" style="left:493.2px;top:332.8px;font-size:5.7px;font-weight:bold;color:#e4e4e4">:20</div>
<div class="a" style="left:514.3px;top:330.6px;width:1px;height:8px;background:#444"></div><div class="t" style="left:517.2px;top:332.8px;font-size:5.7px;font-weight:bold;color:#e4e4e4">:21</div>
<div class="a" style="left:538.3px;top:330.6px;width:1px;height:8px;background:#444"></div><div class="t" style="left:541.2px;top:332.8px;font-size:5.7px;font-weight:bold;color:#e4e4e4">:22</div>
<div class="a" style="left:562.3px;top:330.6px;width:1px;height:8px;background:#444"></div><div class="t" style="left:565.2px;top:332.8px;font-size:5.7px;font-weight:bold;color:#e4e4e4">:23</div>
<div class="a" style="left:586.3px;top:330.6px;width:1px;height:8px;background:#444"></div><div class="t" style="left:589.2px;top:332.8px;font-size:5.7px;font-weight:bold;color:#e4e4e4">:24</div>
<div class="a" style="left:610.3px;top:330.6px;width:1px;height:8px;background:#444"></div><div class="t" style="left:613.2px;top:332.8px;font-size:5.7px;font-weight:bold;color:#e4e4e4">:25</div>
<div class="a" style="left:634.3px;top:330.6px;width:1px;height:8px;background:#444"></div><div class="t" style="left:637.2px;top:332.8px;font-size:5.7px;font-weight:bold;color:#e4e4e4">:26</div>
<div class="a" style="left:658.3px;top:330.6px;width:1px;height:8px;background:#444"></div><div class="t" style="left:661.2px;top:332.8px;font-size:5.7px;font-weight:bold;color:#e4e4e4">:27</div>
<div class="a" style="left:682.3px;top:330.6px;width:1px;height:8px;background:#444"></div><div class="t" style="left:685.2px;top:332.8px;font-size:5.7px;font-weight:bold;color:#e4e4e4">:28</div>
<div class="a" style="left:706.3px;top:330.6px;width:1px;height:8px;background:#444"></div><div class="t" style="left:709.2px;top:332.8px;font-size:5.7px;font-weight:bold;color:#e4e4e4">:29</div>
<div class="a" style="left:730.3px;top:330.6px;width:1px;height:8px;background:#444"></div><div class="t" style="left:733.2px;top:332.8px;font-size:5.7px;font-weight:bold;color:#e4e4e4">:30</div>
<div class="a" style="left:754.3px;top:330.6px;width:1px;height:8px;background:#444"></div><div class="t" style="left:757.2px;top:332.8px;font-size:5.7px;font-weight:bold;color:#e4e4e4">:31</div>


<svg style="left:0;top:338.6px" width="766" height="6" viewBox="0 338 766 6"><path d="M24.0 338 H25.6 V340.0 L24.0 341.4 Z" fill="#eef4f2"/><path d="M34.0 338 H36.6 V339.3 L34.0 340.2 Z" fill="#eef4f2"/><path d="M44.0 338 H46.0 V340.0 L44.0 341.4 Z" fill="#eef4f2"/><path d="M59.0 338 H61.0 V340.0 L59.0 341.4 Z" fill="#eef4f2"/><path d="M70.0 338 H72.6 V339.3 L70.0 340.2 Z" fill="#eef4f2"/><path d="M83.0 338 H85.6 V339.3 L83.0 340.2 Z" fill="#eef4f2"/><path d="M105.0 338 H107.0 V339.7 L105.0 340.8 Z" fill="#eef4f2"/><path d="M112.0 338 H114.6 V339.3 L112.0 340.2 Z" fill="#eef4f2"/><path d="M122.0 338 H123.6 V340.0 L122.0 341.4 Z" fill="#eef4f2"/><path d="M282.0 338 H284.0 V340.0 L282.0 341.4 Z" fill="#eef4f2"/><path d="M287.0 338 H289.6 V339.7 L287.0 340.8 Z" fill="#eef4f2"/><path d="M330.0 338 H332.0 V340.0 L330.0 341.4 Z" fill="#eef4f2"/><path d="M334.0 338 H335.6 V339.3 L334.0 340.2 Z" fill="#eef4f2"/><path d="M341.5 338 H344.1 V339.3 L341.5 340.2 Z" fill="#eef4f2"/><path d="M355.0 338 H357.6 V339.7 L355.0 340.8 Z" fill="#eef4f2"/><path d="M360.0 338 H362.6 V339.3 L360.0 340.2 Z" fill="#eef4f2"/><path d="M377.0 338 H379.6 V339.3 L377.0 340.2 Z" fill="#eef4f2"/><path d="M380.6 338 H382.2 V340.0 L380.6 341.4 Z" fill="#eef4f2"/><path d="M401.0 338 H402.6 V339.7 L401.0 340.8 Z" fill="#eef4f2"/><path d="M407.7 338 H409.3 V339.7 L407.7 340.8 Z" fill="#eef4f2"/><path d="M422.0 338 H424.0 V340.0 L422.0 341.4 Z" fill="#eef4f2"/><path d="M430.0 338 H432.6 V339.7 L430.0 340.8 Z" fill="#eef4f2"/><path d="M480.7 338 H483.3 V339.7 L480.7 340.8 Z" fill="#eef4f2"/><path d="M486.0 338 H488.0 V340.0 L486.0 341.4 Z" fill="#eef4f2"/><path d="M499.0 338 H501.6 V339.7 L499.0 340.8 Z" fill="#eef4f2"/><path d="M509.6 338 H511.2 V339.7 L509.6 340.8 Z" fill="#eef4f2"/><path d="M535.0 338 H536.6 V339.3 L535.0 340.2 Z" fill="#eef4f2"/><path d="M543.0 338 H544.6 V339.7 L543.0 340.8 Z" fill="#eef4f2"/><path d="M562.0 338 H563.6 V339.7 L562.0 340.8 Z" fill="#eef4f2"/><path d="M602.7 338 H605.3 V339.7 L602.7 340.8 Z" fill="#eef4f2"/><path d="M618.0 338 H620.6 V339.7 L618.0 340.8 Z" fill="#eef4f2"/><path d="M623.0 338 H625.0 V340.0 L623.0 341.4 Z" fill="#eef4f2"/><path d="M641.8 338 H643.8 V340.0 L641.8 341.4 Z" fill="#eef4f2"/><path d="M655.0 338 H657.0 V340.0 L655.0 341.4 Z" fill="#eef4f2"/><path d="M664.0 338 H666.6 V339.7 L664.0 340.8 Z" fill="#eef4f2"/><path d="M672.0 338 H674.6 V339.3 L672.0 340.2 Z" fill="#eef4f2"/><path d="M699.5 338 H701.5 V340.0 L699.5 341.4 Z" fill="#eef4f2"/><path d="M723.0 338 H724.6 V339.7 L723.0 340.8 Z" fill="#eef4f2"/><path d="M730.0 338 H732.6 V340.0 L730.0 341.4 Z" fill="#eef4f2"/><path d="M743.6 338 H746.2 V339.3 L743.6 340.2 Z" fill="#eef4f2"/><path d="M760.6 338 H763.2 V339.7 L760.6 340.8 Z" fill="#eef4f2"/></svg>
<div class="a" style="left:14.1px;top:331px;width:1.2px;height:4px;background:#fff"></div>
<div class="a" style="left:759.2px;top:330.6px;width:1.3px;height:4.4px;background:#fff"></div>
<!-- track2 -->
<div class="a" style="left:10.8px;top:350.2px;width:752.4px;height:27.8px;background:#1f4945;border:1px solid #84a09b;border-bottom:1.6px solid #7e47a2;border-radius:3px"></div>
<div class="a" style="left:17px;top:364px;width:738px;height:1px;background:#a9c2bd;opacity:0.5"></div>
<div class="a" style="left:14px;top:360px;width:1.4px;height:8.4px;background:#f4f4f4"></div>
<div class="a" style="left:262px;top:363.8px;width:497px;height:1.4px;background:#c5d8d4;opacity:0.6"></div>
<div class="a" style="left:758.8px;top:360px;width:1.4px;height:8.4px;background:#f4f4f4"></div>
<!-- track3 clips -->
<svg style="left:0;top:380px" width="766" height="36" viewBox="0 380 766 36"><defs><clipPath id="c1"><rect x="10.6" y="384.2" width="85.3" height="27.3" rx="3"/></clipPath><clipPath id="c2"><rect x="96.8" y="384.2" width="43.2" height="27.3" rx="3"/></clipPath><clipPath id="c3"><rect x="255.0" y="384.2" width="21.6" height="27.3" rx="3"/></clipPath><clipPath id="c4"><rect x="277.6" y="384.2" width="47.5" height="27.3" rx="3"/></clipPath><clipPath id="c5"><rect x="326.0" y="384.2" width="151.1" height="27.3" rx="3"/></clipPath><clipPath id="c6"><rect x="478.1" y="384.2" width="117.7" height="27.3" rx="3"/></clipPath><clipPath id="c7"><rect x="596.6" y="384.2" width="97.8" height="27.3" rx="3"/></clipPath><clipPath id="c8"><rect x="695.3" y="384.2" width="66.9" height="27.3" rx="3"/></clipPath><filter id="tb" x="-5%" y="-20%" width="110%" height="140%"><feGaussianBlur stdDeviation="0.55"/></filter><filter id="tb2" x="-5%" y="-20%" width="110%" height="140%"><feGaussianBlur stdDeviation="0.9"/></filter></defs>
<g clip-path="url(#c1)"><g filter="url(#tb)"><rect x="8.0" y="382.0" width="92.0" height="32.0" fill="#2a2625" /><rect x="12.0" y="384.0" width="14.4" height="14.6" fill="#e4e2df" /><rect x="15.6" y="384.0" width="1.2" height="14.6" fill="#6a6664" /><rect x="20.6" y="384.0" width="1.2" height="14.6" fill="#6a6664" /><rect x="12.0" y="391.0" width="14.0" height="1.0" fill="#8a8684" /><rect x="26.4" y="384.0" width="2.2" height="28.0" fill="#3c3836" /><ellipse cx="32.2" cy="390.4" rx="3.6" ry="5.4" fill="#5b4236" /><rect x="30.6" y="394.0" width="3.6" height="4.0" fill="#8c6e5e" /><path d="M23.5 411.6 L25 401 C27 398 30 397.6 32.4 397.6 C35 397.6 38.6 398 41 400.4 L44.4 411.6 Z" fill="#9a7a68"/><path d="M26 402 L40 405.6 M40 402 L26 405.6 M25.6 407.6 H41" stroke="#161616" stroke-width="1.5"/><rect x="11.0" y="399.0" width="37.0" height="1.4" fill="#cfcfcf" /><path d="M16.4 400.4 L19.6 400.4 L25 404 L24 407 Z" fill="#9a7a68"/><rect x="40.0" y="386.0" width="4.0" height="10.0" fill="#4a4644" /><rect x="44.4" y="384.0" width="0.8" height="28.0" fill="#151515" /><rect x="48.0" y="384.0" width="11.0" height="3.8" fill="#dedbd8" /><rect x="46.0" y="388.6" width="6.0" height="9.0" fill="#55504c" /><ellipse cx="63.0" cy="386.8" rx="4.2" ry="3.6" fill="#4e382e" /><path d="M52.6 398.8 L53.6 391.6 C56 389 60 388.4 63.4 388.4 C67 388.4 72 389 75.6 392 L76.4 398.8 Z" fill="#9a7a68"/><path d="M55 392.6 L73 396.4 M73 392.6 L55 396.4" stroke="#161616" stroke-width="1.5"/><rect x="47.6" y="387.2" width="31.6" height="1.4" fill="#d2d2d2" /><path d="M56.6 411.6 L57.6 398.6 L74.4 398.6 L75.4 411.6 Z" fill="#171717"/><rect x="76.4" y="387.0" width="8.0" height="11.6" fill="#6e6a68" /><rect x="77.4" y="399.0" width="5.0" height="12.0" fill="#3e3a38" /><rect x="46.0" y="398.0" width="9.0" height="13.6" fill="#3a3634" /><rect x="79.6" y="384.0" width="0.8" height="28.0" fill="#151515" /><rect x="81.6" y="385.0" width="5.4" height="10.0" fill="#5e5a58" /><rect x="84.0" y="396.0" width="9.0" height="15.6" fill="#45413f" /><rect x="88.4" y="384.0" width="7.6" height="6.6" fill="#77726f" /><rect x="88.4" y="391.0" width="7.0" height="4.4" fill="#2f2b2a" /></g></g><rect x="11.0" y="384.6" width="84.5" height="26.5" rx="3" fill="none" stroke="#b9b9b9" stroke-width="0.9"/><rect x="13.6" y="394.2" width="1.3" height="6.4" fill="#e8e8e8" /><rect x="91.6" y="394.2" width="1.5" height="6.4" fill="#fff" />
<g clip-path="url(#c2)"><rect x="96.0" y="383.0" width="50.0" height="30.0" fill="#fefefe" /><g filter="url(#tb)"><path d="M111 402.4 C113 401.4 120 401.2 123.4 402.6 C123.4 404.4 121 405.6 117 405.6 C113.6 405.6 110.8 404.6 111 402.4 Z" fill="#2a2a2a"/><path d="M113.2 395.4 C112.4 397.6 112.6 400 113.6 402.2 L118.4 402.2 L119 398 L117.6 394.6 Z" fill="#b08c7b"/><path d="M114.6 394.2 L117.8 393.8 C118.6 395.4 118.8 397 118.6 398.4 L115 398.8 C114.4 397.4 114.4 395.6 114.6 394.2 Z" fill="#1e1e1e"/><path d="M118.4 397.6 L122.4 401.8 L121.6 402.6 L117.6 399.6 Z" fill="#b08c7b"/><ellipse cx="116.3" cy="391.6" rx="2.1" ry="2.5" fill="#2a2a2a" /><rect x="117.0" y="391.0" width="1.6" height="2.4" fill="#a98575" /></g></g><rect x="97.5" y="384.9" width="50" height="25.9" rx="3" fill="none" stroke="#e3e79f" stroke-width="1.5"/><rect x="100.0" y="394.2" width="1.2" height="6.4" fill="#cfcfcf" />
<g clip-path="url(#c3)"><g filter="url(#tb)"><rect x="255.0" y="383.0" width="24.0" height="30.0" fill="#cbbcbb" /><rect x="262.0" y="398.5" width="9.5" height="14.0" fill="#c3aa94" /><rect x="272.8" y="401.0" width="2.6" height="11.0" fill="#5a9a86" /><rect x="262.0" y="384.0" width="15.0" height="5.0" fill="#b9abac" /><rect x="266.0" y="390.0" width="6.0" height="8.0" fill="#d8cccb" /></g></g><rect x="272.8" y="394.2" width="1.3" height="6.4" fill="#f2f2f2" />
<g clip-path="url(#c4)"><rect x="277.0" y="383.0" width="50.0" height="30.0" fill="#fff" /><g filter="url(#tb)"><rect x="282.0" y="396.7" width="42.6" height="1.8" fill="#d2a11a" /><rect x="282.0" y="398.2" width="42.6" height="0.5" fill="#8a6a10" /><rect x="278.6" y="394.4" width="3.0" height="2.2" fill="#6e5410" /><rect x="279.2" y="397.4" width="2.6" height="3.2" fill="#c9a020" /><rect x="281.6" y="395.6" width="1.4" height="4.2" fill="#b08a18" /><circle cx="304.2" cy="397.8" r="2.7" fill="none" stroke="#c59a14" stroke-width="1.3"/><circle cx="311.0" cy="397.8" r="2.7" fill="none" stroke="#c59a14" stroke-width="1.3"/><circle cx="307.6" cy="394.4" r="2.7" fill="none" stroke="#c59a14" stroke-width="1.3"/><circle cx="307.6" cy="401.2" r="2.7" fill="none" stroke="#c59a14" stroke-width="1.3"/><circle cx="305.0" cy="395.2" r="1.5" fill="none" stroke="#8a6a10" stroke-width="0.7"/><circle cx="310.2" cy="395.2" r="1.5" fill="none" stroke="#8a6a10" stroke-width="0.7"/><circle cx="305.0" cy="400.4" r="1.5" fill="none" stroke="#8a6a10" stroke-width="0.7"/><circle cx="310.2" cy="400.4" r="1.5" fill="none" stroke="#8a6a10" stroke-width="0.7"/><circle cx="307.6" cy="397.8" r="1.6" fill="#e2bb3a" stroke="#8a6a10" stroke-width="0.5"/><rect x="297.6" y="395.6" width="2.2" height="4.4" fill="#a8820e" /><rect x="315.4" y="395.8" width="2.0" height="4.0" fill="#7a5c10" /><rect x="318.0" y="396.2" width="1.4" height="3.2" fill="#c9a020" /></g></g><rect x="281.4" y="394.2" width="1.2" height="6.4" fill="#e6e6e6" /><rect x="320.6" y="394.2" width="1.2" height="6.4" fill="#e6e6e6" />
<g clip-path="url(#c5)"><g filter="url(#tb)"><rect x="325.0" y="383.0" width="154.0" height="30.0" fill="#b4b8bb" /><rect x="326.0" y="384.0" width="36.3" height="15.0" fill="#7f8481" /><rect x="342.4" y="392.1" width="3.0" height="1.6" fill="#7b807c" /><rect x="332.7" y="391.4" width="2.4" height="2.2" fill="#6c716d" /><rect x="342.2" y="386.1" width="2.2" height="2.4" fill="#555a56" /><rect x="347.6" y="389.7" width="2.0" height="2.1" fill="#474b47" /><rect x="348.6" y="396.1" width="1.1" height="0.9" fill="#7b807c" /><rect x="347.8" y="395.3" width="1.7" height="1.9" fill="#7b807c" /><rect x="344.8" y="393.3" width="2.1" height="2.0" fill="#4a4e4a" /><rect x="349.8" y="389.9" width="2.2" height="2.5" fill="#6c716d" /><rect x="351.7" y="388.6" width="1.5" height="1.3" fill="#6c716d" /><rect x="346.4" y="385.6" width="1.2" height="1.3" fill="#6c716d" /><rect x="360.8" y="396.3" width="1.0" height="1.2" fill="#555a56" /><rect x="343.1" y="398.2" width="1.9" height="0.9" fill="#7b807c" /><rect x="354.3" y="387.9" width="1.2" height="1.4" fill="#3e423e" /><rect x="353.5" y="385.7" width="1.5" height="1.0" fill="#555a56" /><rect x="342.9" y="391.1" width="2.5" height="1.1" fill="#7b807c" /><rect x="361.8" y="395.2" width="0.5" height="1.5" fill="#3e423e" /><rect x="341.3" y="387.1" width="1.6" height="2.5" fill="#dfe2e4" /><rect x="362.2" y="384.3" width="0.1" height="2.6" fill="#6c716d" /><rect x="327.5" y="386.1" width="2.0" height="0.8" fill="#c2c6c9" /><rect x="356.1" y="389.6" width="1.2" height="1.2" fill="#7b807c" /><rect x="326.6" y="389.3" width="2.4" height="1.0" fill="#4a4e4a" /><rect x="356.2" y="386.0" width="1.8" height="1.9" fill="#dfe2e4" /><rect x="359.0" y="395.9" width="1.5" height="1.1" fill="#7b807c" /><rect x="350.9" y="389.6" width="2.1" height="0.9" fill="#555a56" /><rect x="329.8" y="384.6" width="3.1" height="1.2" fill="#3e423e" /><rect x="335.3" y="395.9" width="2.3" height="1.3" fill="#474b47" /><rect x="359.7" y="398.2" width="1.3" height="1.7" fill="#6c716d" /><rect x="336.2" y="397.3" width="1.4" height="0.8" fill="#dfe2e4" /><rect x="340.9" y="387.6" width="1.1" height="1.3" fill="#474b47" /><rect x="329.3" y="386.0" width="2.0" height="1.4" fill="#474b47" /><rect x="347.4" y="397.4" width="2.0" height="1.4" fill="#dfe2e4" /><rect x="360.9" y="384.3" width="1.4" height="1.7" fill="#dfe2e4" /><rect x="337.6" y="398.5" width="1.2" height="1.8" fill="#555a56" /><rect x="358.7" y="394.7" width="2.5" height="2.2" fill="#c2c6c9" /><rect x="338.8" y="393.9" width="3.0" height="2.4" fill="#3e423e" /><rect x="360.3" y="384.4" width="2.0" height="0.8" fill="#3e423e" /><rect x="339.8" y="384.2" width="1.2" height="1.0" fill="#6c716d" /><rect x="362.1" y="396.8" width="0.2" height="1.5" fill="#4a4e4a" /><rect x="342.0" y="396.2" width="1.2" height="2.2" fill="#555a56" /><rect x="337.3" y="385.3" width="1.0" height="2.5" fill="#6c716d" /><rect x="344.1" y="392.9" width="3.0" height="1.3" fill="#555a56" /><rect x="339.4" y="386.1" width="2.3" height="1.7" fill="#c2c6c9" /><rect x="350.0" y="390.4" width="3.0" height="1.4" fill="#dfe2e4" /><rect x="333.2" y="390.2" width="2.8" height="2.4" fill="#7b807c" /><rect x="340.0" y="392.5" width="1.7" height="1.0" fill="#4a4e4a" /><rect x="338.7" y="397.0" width="1.1" height="0.9" fill="#dfe2e4" /><rect x="355.8" y="385.6" width="2.0" height="2.5" fill="#3e423e" /><rect x="339.9" y="391.5" width="2.5" height="2.1" fill="#4a4e4a" /><rect x="337.6" y="396.0" width="1.6" height="1.9" fill="#dfe2e4" /><rect x="346.7" y="388.5" width="2.7" height="0.8" fill="#474b47" /><rect x="340.7" y="386.8" width="2.7" height="1.3" fill="#474b47" /><rect x="354.9" y="398.3" width="1.3" height="1.0" fill="#c2c6c9" /><rect x="360.8" y="393.9" width="1.4" height="1.7" fill="#474b47" /><rect x="351.9" y="394.9" width="2.2" height="0.9" fill="#7b807c" /><rect x="335.9" y="389.0" width="2.5" height="1.7" fill="#474b47" /><rect x="340.3" y="395.5" width="3.0" height="1.0" fill="#3e423e" /><rect x="330.7" y="390.6" width="2.4" height="2.4" fill="#3e423e" /><rect x="346.0" y="393.5" width="2.1" height="2.3" fill="#c2c6c9" /><rect x="342.8" y="393.4" width="1.5" height="2.1" fill="#6c716d" /><rect x="333.7" y="397.0" width="3.2" height="2.6" fill="#c2c6c9" /><rect x="335.5" y="394.4" width="1.0" height="1.7" fill="#555a56" /><rect x="342.0" y="392.0" width="2.7" height="1.7" fill="#555a56" /><rect x="333.9" y="396.6" width="1.9" height="0.9" fill="#c2c6c9" /><rect x="350.9" y="397.3" width="2.0" height="2.6" fill="#4a4e4a" /><rect x="360.3" y="391.1" width="2.0" height="1.0" fill="#7b807c" /><rect x="342.0" y="392.1" width="2.8" height="1.8" fill="#474b47" /><rect x="345.0" y="396.2" width="2.2" height="1.4" fill="#3e423e" /><rect x="360.7" y="396.6" width="1.6" height="1.3" fill="#474b47" /><rect x="361.2" y="391.6" width="1.1" height="1.2" fill="#6c716d" /><rect x="344.3" y="392.8" width="1.1" height="2.5" fill="#3e423e" /><rect x="345.7" y="398.3" width="1.3" height="1.0" fill="#474b47" /><rect x="328.4" y="391.8" width="1.9" height="2.5" fill="#3e423e" /><rect x="335.8" y="390.9" width="1.3" height="1.6" fill="#4a4e4a" /><rect x="345.1" y="385.6" width="1.9" height="0.9" fill="#dfe2e4" /><rect x="330.7" y="395.3" width="1.1" height="1.1" fill="#7b807c" /><rect x="326.4" y="388.1" width="2.6" height="1.2" fill="#4a4e4a" /><rect x="329.8" y="394.6" width="1.3" height="1.7" fill="#dfe2e4" /><rect x="352.1" y="394.2" width="2.9" height="0.8" fill="#3e423e" /><rect x="356.0" y="392.9" width="2.2" height="2.4" fill="#7b807c" /><rect x="345.2" y="396.3" width="2.3" height="2.3" fill="#7b807c" /><rect x="336.2" y="384.0" width="25.4" height="5.6" fill="#3f5a35" /><rect x="339.1" y="388.8" width="17.8" height="3.4" fill="#4b663d" /><rect x="337.6" y="385.0" width="4.0" height="2.0" fill="#38502d" /><rect x="342.0" y="388.0" width="1.8" height="16.0" fill="#3f413e" /><rect x="331.8" y="390.0" width="1.2" height="13.0" fill="#555754" /><rect x="355.0" y="391.0" width="1.4" height="13.0" fill="#494b48" /><rect x="328.0" y="396.5" width="9.0" height="4.6" fill="#d5dbe2" /><rect x="344.0" y="397.0" width="8.0" height="4.0" fill="#bfc7d0" /><rect x="326.0" y="401.4" width="36.3" height="4.4" fill="#636762" /><rect x="357.8" y="403.2" width="1.2" height="2.6" fill="#8d918d" /><rect x="357.4" y="402.1" width="1.2" height="2.6" fill="#8d918d" /><rect x="357.0" y="401.7" width="1.2" height="2.6" fill="#484b47" /><rect x="356.9" y="401.5" width="1.2" height="2.6" fill="#484b47" /><rect x="330.6" y="401.3" width="1.2" height="2.6" fill="#2a2c2a" /><rect x="329.4" y="403.9" width="1.2" height="2.6" fill="#2a2c2a" /><rect x="344.9" y="403.5" width="1.2" height="2.6" fill="#484b47" /><rect x="340.0" y="403.4" width="1.2" height="2.6" fill="#30332f" /><rect x="329.3" y="403.0" width="1.2" height="2.6" fill="#8d918d" /><rect x="357.7" y="404.4" width="1.2" height="2.6" fill="#30332f" /><rect x="326.0" y="405.8" width="36.3" height="6.0" fill="#ada39a" /><rect x="326.0" y="408.0" width="34.5" height="3.6" fill="#c08f6e" /><rect x="346.0" y="406.0" width="10.9" height="2.4" fill="#5c5f5b" /><rect x="362.3" y="384.0" width="36.3" height="15.0" fill="#7f8481" /><rect x="378.7" y="392.1" width="3.0" height="1.6" fill="#7b807c" /><rect x="369.0" y="391.4" width="2.4" height="2.2" fill="#6c716d" /><rect x="378.5" y="386.1" width="2.2" height="2.4" fill="#555a56" /><rect x="383.9" y="389.7" width="2.0" height="2.1" fill="#474b47" /><rect x="384.9" y="396.1" width="1.1" height="0.9" fill="#7b807c" /><rect x="384.1" y="395.3" width="1.7" height="1.9" fill="#7b807c" /><rect x="381.1" y="393.3" width="2.1" height="2.0" fill="#4a4e4a" /><rect x="386.1" y="389.9" width="2.2" height="2.5" fill="#6c716d" /><rect x="388.0" y="388.6" width="1.5" height="1.3" fill="#6c716d" /><rect x="382.7" y="385.6" width="1.2" height="1.3" fill="#6c716d" /><rect x="397.1" y="396.3" width="1.0" height="1.2" fill="#555a56" /><rect x="379.4" y="398.2" width="1.9" height="0.9" fill="#7b807c" /><rect x="390.6" y="387.9" width="1.2" height="1.4" fill="#3e423e" /><rect x="389.8" y="385.7" width="1.5" height="1.0" fill="#555a56" /><rect x="379.2" y="391.1" width="2.5" height="1.1" fill="#7b807c" /><rect x="398.1" y="395.2" width="0.5" height="1.5" fill="#3e423e" /><rect x="377.6" y="387.1" width="1.6" height="2.5" fill="#dfe2e4" /><rect x="398.5" y="384.3" width="0.1" height="2.6" fill="#6c716d" /><rect x="363.8" y="386.1" width="2.0" height="0.8" fill="#c2c6c9" /><rect x="392.4" y="389.6" width="1.2" height="1.2" fill="#7b807c" /><rect x="362.9" y="389.3" width="2.4" height="1.0" fill="#4a4e4a" /><rect x="392.5" y="386.0" width="1.8" height="1.9" fill="#dfe2e4" /><rect x="395.3" y="395.9" width="1.5" height="1.1" fill="#7b807c" /><rect x="387.2" y="389.6" width="2.1" height="0.9" fill="#555a56" /><rect x="366.1" y="384.6" width="3.1" height="1.2" fill="#3e423e" /><rect x="371.6" y="395.9" width="2.3" height="1.3" fill="#474b47" /><rect x="396.0" y="398.2" width="1.3" height="1.7" fill="#6c716d" /><rect x="372.5" y="397.3" width="1.4" height="0.8" fill="#dfe2e4" /><rect x="377.2" y="387.6" width="1.1" height="1.3" fill="#474b47" /><rect x="365.6" y="386.0" width="2.0" height="1.4" fill="#474b47" /><rect x="383.7" y="397.4" width="2.0" height="1.4" fill="#dfe2e4" /><rect x="397.2" y="384.3" width="1.4" height="1.7" fill="#dfe2e4" /><rect x="373.9" y="398.5" width="1.2" height="1.8" fill="#555a56" /><rect x="395.0" y="394.7" width="2.5" height="2.2" fill="#c2c6c9" /><rect x="375.1" y="393.9" width="3.0" height="2.4" fill="#3e423e" /><rect x="396.6" y="384.4" width="2.0" height="0.8" fill="#3e423e" /><rect x="376.1" y="384.2" width="1.2" height="1.0" fill="#6c716d" /><rect x="398.4" y="396.8" width="0.2" height="1.5" fill="#4a4e4a" /><rect x="378.3" y="396.2" width="1.2" height="2.2" fill="#555a56" /><rect x="373.6" y="385.3" width="1.0" height="2.5" fill="#6c716d" /><rect x="380.4" y="392.9" width="3.0" height="1.3" fill="#555a56" /><rect x="375.7" y="386.1" width="2.3" height="1.7" fill="#c2c6c9" /><rect x="386.3" y="390.4" width="3.0" height="1.4" fill="#dfe2e4" /><rect x="369.5" y="390.2" width="2.8" height="2.4" fill="#7b807c" /><rect x="376.3" y="392.5" width="1.7" height="1.0" fill="#4a4e4a" /><rect x="375.0" y="397.0" width="1.1" height="0.9" fill="#dfe2e4" /><rect x="392.1" y="385.6" width="2.0" height="2.5" fill="#3e423e" /><rect x="376.2" y="391.5" width="2.5" height="2.1" fill="#4a4e4a" /><rect x="373.9" y="396.0" width="1.6" height="1.9" fill="#dfe2e4" /><rect x="383.0" y="388.5" width="2.7" height="0.8" fill="#474b47" /><rect x="377.0" y="386.8" width="2.7" height="1.3" fill="#474b47" /><rect x="391.2" y="398.3" width="1.3" height="1.0" fill="#c2c6c9" /><rect x="397.1" y="393.9" width="1.4" height="1.7" fill="#474b47" /><rect x="388.2" y="394.9" width="2.2" height="0.9" fill="#7b807c" /><rect x="372.2" y="389.0" width="2.5" height="1.7" fill="#474b47" /><rect x="376.6" y="395.5" width="3.0" height="1.0" fill="#3e423e" /><rect x="367.0" y="390.6" width="2.4" height="2.4" fill="#3e423e" /><rect x="382.3" y="393.5" width="2.1" height="2.3" fill="#c2c6c9" /><rect x="379.1" y="393.4" width="1.5" height="2.1" fill="#6c716d" /><rect x="370.0" y="397.0" width="3.2" height="2.6" fill="#c2c6c9" /><rect x="371.8" y="394.4" width="1.0" height="1.7" fill="#555a56" /><rect x="378.3" y="392.0" width="2.7" height="1.7" fill="#555a56" /><rect x="370.2" y="396.6" width="1.9" height="0.9" fill="#c2c6c9" /><rect x="387.2" y="397.3" width="2.0" height="2.6" fill="#4a4e4a" /><rect x="396.6" y="391.1" width="2.0" height="1.0" fill="#7b807c" /><rect x="378.3" y="392.1" width="2.8" height="1.8" fill="#474b47" /><rect x="381.3" y="396.2" width="2.2" height="1.4" fill="#3e423e" /><rect x="397.0" y="396.6" width="1.6" height="1.3" fill="#474b47" /><rect x="397.5" y="391.6" width="1.1" height="1.2" fill="#6c716d" /><rect x="380.6" y="392.8" width="1.1" height="2.5" fill="#3e423e" /><rect x="382.0" y="398.3" width="1.3" height="1.0" fill="#474b47" /><rect x="364.7" y="391.8" width="1.9" height="2.5" fill="#3e423e" /><rect x="372.1" y="390.9" width="1.3" height="1.6" fill="#4a4e4a" /><rect x="381.4" y="385.6" width="1.9" height="0.9" fill="#dfe2e4" /><rect x="367.0" y="395.3" width="1.1" height="1.1" fill="#7b807c" /><rect x="362.7" y="388.1" width="2.6" height="1.2" fill="#4a4e4a" /><rect x="366.1" y="394.6" width="1.3" height="1.7" fill="#dfe2e4" /><rect x="388.4" y="394.2" width="2.9" height="0.8" fill="#3e423e" /><rect x="392.3" y="392.9" width="2.2" height="2.4" fill="#7b807c" /><rect x="381.5" y="396.3" width="2.3" height="2.3" fill="#7b807c" /><rect x="365.9" y="384.0" width="26.1" height="5.6" fill="#3f5a35" /><rect x="368.8" y="388.8" width="18.3" height="3.4" fill="#4b663d" /><rect x="367.4" y="385.0" width="4.0" height="2.0" fill="#38502d" /><rect x="378.3" y="388.0" width="1.8" height="16.0" fill="#3f413e" /><rect x="368.1" y="390.0" width="1.2" height="13.0" fill="#555754" /><rect x="391.3" y="391.0" width="1.4" height="13.0" fill="#494b48" /><rect x="364.3" y="396.5" width="9.0" height="4.6" fill="#d5dbe2" /><rect x="380.3" y="397.0" width="8.0" height="4.0" fill="#bfc7d0" /><rect x="362.3" y="401.4" width="36.3" height="4.4" fill="#636762" /><rect x="386.8" y="403.2" width="1.2" height="2.6" fill="#8d918d" /><rect x="379.8" y="403.4" width="1.2" height="2.6" fill="#484b47" /><rect x="390.2" y="402.7" width="1.2" height="2.6" fill="#30332f" /><rect x="363.6" y="402.9" width="1.2" height="2.6" fill="#2a2c2a" /><rect x="367.4" y="401.6" width="1.2" height="2.6" fill="#484b47" /><rect x="368.3" y="401.6" width="1.2" height="2.6" fill="#8d918d" /><rect x="394.6" y="401.3" width="1.2" height="2.6" fill="#30332f" /><rect x="367.0" y="403.4" width="1.2" height="2.6" fill="#30332f" /><rect x="388.9" y="402.1" width="1.2" height="2.6" fill="#2a2c2a" /><rect x="377.1" y="402.2" width="1.2" height="2.6" fill="#484b47" /><rect x="362.3" y="405.8" width="36.3" height="6.0" fill="#ada39a" /><rect x="365.9" y="408.4" width="18.1" height="3.0" fill="#b39a88" /><rect x="382.3" y="406.0" width="10.9" height="2.4" fill="#5c5f5b" /><rect x="398.6" y="384.0" width="36.3" height="15.0" fill="#7f8481" /><rect x="415.0" y="392.1" width="3.0" height="1.6" fill="#7b807c" /><rect x="405.3" y="391.4" width="2.4" height="2.2" fill="#6c716d" /><rect x="414.8" y="386.1" width="2.2" height="2.4" fill="#555a56" /><rect x="420.2" y="389.7" width="2.0" height="2.1" fill="#474b47" /><rect x="421.2" y="396.1" width="1.1" height="0.9" fill="#7b807c" /><rect x="420.4" y="395.3" width="1.7" height="1.9" fill="#7b807c" /><rect x="417.4" y="393.3" width="2.1" height="2.0" fill="#4a4e4a" /><rect x="422.4" y="389.9" width="2.2" height="2.5" fill="#6c716d" /><rect x="424.3" y="388.6" width="1.5" height="1.3" fill="#6c716d" /><rect x="419.0" y="385.6" width="1.2" height="1.3" fill="#6c716d" /><rect x="433.4" y="396.3" width="1.0" height="1.2" fill="#555a56" /><rect x="415.7" y="398.2" width="1.9" height="0.9" fill="#7b807c" /><rect x="426.9" y="387.9" width="1.2" height="1.4" fill="#3e423e" /><rect x="426.1" y="385.7" width="1.5" height="1.0" fill="#555a56" /><rect x="415.5" y="391.1" width="2.5" height="1.1" fill="#7b807c" /><rect x="434.4" y="395.2" width="0.5" height="1.5" fill="#3e423e" /><rect x="413.9" y="387.1" width="1.6" height="2.5" fill="#dfe2e4" /><rect x="434.8" y="384.3" width="0.1" height="2.6" fill="#6c716d" /><rect x="400.1" y="386.1" width="2.0" height="0.8" fill="#c2c6c9" /><rect x="428.7" y="389.6" width="1.2" height="1.2" fill="#7b807c" /><rect x="399.2" y="389.3" width="2.4" height="1.0" fill="#4a4e4a" /><rect x="428.8" y="386.0" width="1.8" height="1.9" fill="#dfe2e4" /><rect x="431.6" y="395.9" width="1.5" height="1.1" fill="#7b807c" /><rect x="423.5" y="389.6" width="2.1" height="0.9" fill="#555a56" /><rect x="402.4" y="384.6" width="3.1" height="1.2" fill="#3e423e" /><rect x="407.9" y="395.9" width="2.3" height="1.3" fill="#474b47" /><rect x="432.3" y="398.2" width="1.3" height="1.7" fill="#6c716d" /><rect x="408.8" y="397.3" width="1.4" height="0.8" fill="#dfe2e4" /><rect x="413.5" y="387.6" width="1.1" height="1.3" fill="#474b47" /><rect x="401.9" y="386.0" width="2.0" height="1.4" fill="#474b47" /><rect x="420.0" y="397.4" width="2.0" height="1.4" fill="#dfe2e4" /><rect x="433.5" y="384.3" width="1.4" height="1.7" fill="#dfe2e4" /><rect x="410.2" y="398.5" width="1.2" height="1.8" fill="#555a56" /><rect x="431.3" y="394.7" width="2.5" height="2.2" fill="#c2c6c9" /><rect x="411.4" y="393.9" width="3.0" height="2.4" fill="#3e423e" /><rect x="432.9" y="384.4" width="2.0" height="0.8" fill="#3e423e" /><rect x="412.4" y="384.2" width="1.2" height="1.0" fill="#6c716d" /><rect x="434.7" y="396.8" width="0.2" height="1.5" fill="#4a4e4a" /><rect x="414.6" y="396.2" width="1.2" height="2.2" fill="#555a56" /><rect x="409.9" y="385.3" width="1.0" height="2.5" fill="#6c716d" /><rect x="416.7" y="392.9" width="3.0" height="1.3" fill="#555a56" /><rect x="412.0" y="386.1" width="2.3" height="1.7" fill="#c2c6c9" /><rect x="422.6" y="390.4" width="3.0" height="1.4" fill="#dfe2e4" /><rect x="405.8" y="390.2" width="2.8" height="2.4" fill="#7b807c" /><rect x="412.6" y="392.5" width="1.7" height="1.0" fill="#4a4e4a" /><rect x="411.3" y="397.0" width="1.1" height="0.9" fill="#dfe2e4" /><rect x="428.4" y="385.6" width="2.0" height="2.5" fill="#3e423e" /><rect x="412.5" y="391.5" width="2.5" height="2.1" fill="#4a4e4a" /><rect x="410.2" y="396.0" width="1.6" height="1.9" fill="#dfe2e4" /><rect x="419.3" y="388.5" width="2.7" height="0.8" fill="#474b47" /><rect x="413.3" y="386.8" width="2.7" height="1.3" fill="#474b47" /><rect x="427.5" y="398.3" width="1.3" height="1.0" fill="#c2c6c9" /><rect x="433.4" y="393.9" width="1.4" height="1.7" fill="#474b47" /><rect x="424.5" y="394.9" width="2.2" height="0.9" fill="#7b807c" /><rect x="408.5" y="389.0" width="2.5" height="1.7" fill="#474b47" /><rect x="412.9" y="395.5" width="3.0" height="1.0" fill="#3e423e" /><rect x="403.3" y="390.6" width="2.4" height="2.4" fill="#3e423e" /><rect x="418.6" y="393.5" width="2.1" height="2.3" fill="#c2c6c9" /><rect x="415.4" y="393.4" width="1.5" height="2.1" fill="#6c716d" /><rect x="406.3" y="397.0" width="3.2" height="2.6" fill="#c2c6c9" /><rect x="408.1" y="394.4" width="1.0" height="1.7" fill="#555a56" /><rect x="414.6" y="392.0" width="2.7" height="1.7" fill="#555a56" /><rect x="406.5" y="396.6" width="1.9" height="0.9" fill="#c2c6c9" /><rect x="423.5" y="397.3" width="2.0" height="2.6" fill="#4a4e4a" /><rect x="432.9" y="391.1" width="2.0" height="1.0" fill="#7b807c" /><rect x="414.6" y="392.1" width="2.8" height="1.8" fill="#474b47" /><rect x="417.6" y="396.2" width="2.2" height="1.4" fill="#3e423e" /><rect x="433.3" y="396.6" width="1.6" height="1.3" fill="#474b47" /><rect x="433.8" y="391.6" width="1.1" height="1.2" fill="#6c716d" /><rect x="416.9" y="392.8" width="1.1" height="2.5" fill="#3e423e" /><rect x="418.3" y="398.3" width="1.3" height="1.0" fill="#474b47" /><rect x="401.0" y="391.8" width="1.9" height="2.5" fill="#3e423e" /><rect x="408.4" y="390.9" width="1.3" height="1.6" fill="#4a4e4a" /><rect x="417.7" y="385.6" width="1.9" height="0.9" fill="#dfe2e4" /><rect x="403.3" y="395.3" width="1.1" height="1.1" fill="#7b807c" /><rect x="399.0" y="388.1" width="2.6" height="1.2" fill="#4a4e4a" /><rect x="402.4" y="394.6" width="1.3" height="1.7" fill="#dfe2e4" /><rect x="424.7" y="394.2" width="2.9" height="0.8" fill="#3e423e" /><rect x="428.6" y="392.9" width="2.2" height="2.4" fill="#7b807c" /><rect x="417.8" y="396.3" width="2.3" height="2.3" fill="#7b807c" /><rect x="423.3" y="384.0" width="11.6" height="5.6" fill="#3f5a35" /><rect x="426.2" y="388.8" width="8.1" height="3.4" fill="#4b663d" /><rect x="424.7" y="385.0" width="4.0" height="2.0" fill="#38502d" /><rect x="414.6" y="388.0" width="1.8" height="16.0" fill="#3f413e" /><rect x="404.4" y="390.0" width="1.2" height="13.0" fill="#555754" /><rect x="427.6" y="391.0" width="1.4" height="13.0" fill="#494b48" /><rect x="400.6" y="396.5" width="9.0" height="4.6" fill="#d5dbe2" /><rect x="416.6" y="397.0" width="8.0" height="4.0" fill="#bfc7d0" /><rect x="398.6" y="401.4" width="36.3" height="4.4" fill="#636762" /><rect x="419.5" y="401.0" width="1.2" height="2.6" fill="#30332f" /><rect x="428.0" y="401.6" width="1.2" height="2.6" fill="#2a2c2a" /><rect x="411.1" y="402.3" width="1.2" height="2.6" fill="#484b47" /><rect x="419.6" y="401.3" width="1.2" height="2.6" fill="#30332f" /><rect x="409.9" y="401.3" width="1.2" height="2.6" fill="#2a2c2a" /><rect x="418.4" y="401.7" width="1.2" height="2.6" fill="#8d918d" /><rect x="426.6" y="401.9" width="1.2" height="2.6" fill="#30332f" /><rect x="424.5" y="403.7" width="1.2" height="2.6" fill="#2a2c2a" /><rect x="403.2" y="402.2" width="1.2" height="2.6" fill="#8d918d" /><rect x="425.3" y="403.7" width="1.2" height="2.6" fill="#2a2c2a" /><rect x="398.6" y="405.8" width="36.3" height="6.0" fill="#ada39a" /><rect x="398.6" y="408.0" width="34.5" height="3.6" fill="#c08f6e" /><rect x="418.6" y="406.0" width="10.9" height="2.4" fill="#5c5f5b" /><rect x="434.9" y="384.0" width="36.3" height="15.0" fill="#7f8481" /><rect x="451.3" y="392.1" width="3.0" height="1.6" fill="#7b807c" /><rect x="441.6" y="391.4" width="2.4" height="2.2" fill="#6c716d" /><rect x="451.1" y="386.1" width="2.2" height="2.4" fill="#555a56" /><rect x="456.5" y="389.7" width="2.0" height="2.1" fill="#474b47" /><rect x="457.5" y="396.1" width="1.1" height="0.9" fill="#7b807c" /><rect x="456.7" y="395.3" width="1.7" height="1.9" fill="#7b807c" /><rect x="453.7" y="393.3" width="2.1" height="2.0" fill="#4a4e4a" /><rect x="458.7" y="389.9" width="2.2" height="2.5" fill="#6c716d" /><rect x="460.6" y="388.6" width="1.5" height="1.3" fill="#6c716d" /><rect x="455.3" y="385.6" width="1.2" height="1.3" fill="#6c716d" /><rect x="469.7" y="396.3" width="1.0" height="1.2" fill="#555a56" /><rect x="452.0" y="398.2" width="1.9" height="0.9" fill="#7b807c" /><rect x="463.2" y="387.9" width="1.2" height="1.4" fill="#3e423e" /><rect x="462.4" y="385.7" width="1.5" height="1.0" fill="#555a56" /><rect x="451.8" y="391.1" width="2.5" height="1.1" fill="#7b807c" /><rect x="470.7" y="395.2" width="0.5" height="1.5" fill="#3e423e" /><rect x="450.2" y="387.1" width="1.6" height="2.5" fill="#dfe2e4" /><rect x="471.1" y="384.3" width="0.1" height="2.6" fill="#6c716d" /><rect x="436.4" y="386.1" width="2.0" height="0.8" fill="#c2c6c9" /><rect x="465.0" y="389.6" width="1.2" height="1.2" fill="#7b807c" /><rect x="435.5" y="389.3" width="2.4" height="1.0" fill="#4a4e4a" /><rect x="465.1" y="386.0" width="1.8" height="1.9" fill="#dfe2e4" /><rect x="467.9" y="395.9" width="1.5" height="1.1" fill="#7b807c" /><rect x="459.8" y="389.6" width="2.1" height="0.9" fill="#555a56" /><rect x="438.7" y="384.6" width="3.1" height="1.2" fill="#3e423e" /><rect x="444.2" y="395.9" width="2.3" height="1.3" fill="#474b47" /><rect x="468.6" y="398.2" width="1.3" height="1.7" fill="#6c716d" /><rect x="445.1" y="397.3" width="1.4" height="0.8" fill="#dfe2e4" /><rect x="449.8" y="387.6" width="1.1" height="1.3" fill="#474b47" /><rect x="438.2" y="386.0" width="2.0" height="1.4" fill="#474b47" /><rect x="456.3" y="397.4" width="2.0" height="1.4" fill="#dfe2e4" /><rect x="469.8" y="384.3" width="1.4" height="1.7" fill="#dfe2e4" /><rect x="446.5" y="398.5" width="1.2" height="1.8" fill="#555a56" /><rect x="467.6" y="394.7" width="2.5" height="2.2" fill="#c2c6c9" /><rect x="447.7" y="393.9" width="3.0" height="2.4" fill="#3e423e" /><rect x="469.2" y="384.4" width="2.0" height="0.8" fill="#3e423e" /><rect x="448.7" y="384.2" width="1.2" height="1.0" fill="#6c716d" /><rect x="471.0" y="396.8" width="0.2" height="1.5" fill="#4a4e4a" /><rect x="450.9" y="396.2" width="1.2" height="2.2" fill="#555a56" /><rect x="446.2" y="385.3" width="1.0" height="2.5" fill="#6c716d" /><rect x="453.0" y="392.9" width="3.0" height="1.3" fill="#555a56" /><rect x="448.3" y="386.1" width="2.3" height="1.7" fill="#c2c6c9" /><rect x="458.9" y="390.4" width="3.0" height="1.4" fill="#dfe2e4" /><rect x="442.1" y="390.2" width="2.8" height="2.4" fill="#7b807c" /><rect x="448.9" y="392.5" width="1.7" height="1.0" fill="#4a4e4a" /><rect x="447.6" y="397.0" width="1.1" height="0.9" fill="#dfe2e4" /><rect x="464.7" y="385.6" width="2.0" height="2.5" fill="#3e423e" /><rect x="448.8" y="391.5" width="2.5" height="2.1" fill="#4a4e4a" /><rect x="446.5" y="396.0" width="1.6" height="1.9" fill="#dfe2e4" /><rect x="455.6" y="388.5" width="2.7" height="0.8" fill="#474b47" /><rect x="449.6" y="386.8" width="2.7" height="1.3" fill="#474b47" /><rect x="463.8" y="398.3" width="1.3" height="1.0" fill="#c2c6c9" /><rect x="469.7" y="393.9" width="1.4" height="1.7" fill="#474b47" /><rect x="460.8" y="394.9" width="2.2" height="0.9" fill="#7b807c" /><rect x="444.8" y="389.0" width="2.5" height="1.7" fill="#474b47" /><rect x="449.2" y="395.5" width="3.0" height="1.0" fill="#3e423e" /><rect x="439.6" y="390.6" width="2.4" height="2.4" fill="#3e423e" /><rect x="454.9" y="393.5" width="2.1" height="2.3" fill="#c2c6c9" /><rect x="451.7" y="393.4" width="1.5" height="2.1" fill="#6c716d" /><rect x="442.6" y="397.0" width="3.2" height="2.6" fill="#c2c6c9" /><rect x="444.4" y="394.4" width="1.0" height="1.7" fill="#555a56" /><rect x="450.9" y="392.0" width="2.7" height="1.7" fill="#555a56" /><rect x="442.8" y="396.6" width="1.9" height="0.9" fill="#c2c6c9" /><rect x="459.8" y="397.3" width="2.0" height="2.6" fill="#4a4e4a" /><rect x="469.2" y="391.1" width="2.0" height="1.0" fill="#7b807c" /><rect x="450.9" y="392.1" width="2.8" height="1.8" fill="#474b47" /><rect x="453.9" y="396.2" width="2.2" height="1.4" fill="#3e423e" /><rect x="469.6" y="396.6" width="1.6" height="1.3" fill="#474b47" /><rect x="470.1" y="391.6" width="1.1" height="1.2" fill="#6c716d" /><rect x="453.2" y="392.8" width="1.1" height="2.5" fill="#3e423e" /><rect x="454.6" y="398.3" width="1.3" height="1.0" fill="#474b47" /><rect x="437.3" y="391.8" width="1.9" height="2.5" fill="#3e423e" /><rect x="444.7" y="390.9" width="1.3" height="1.6" fill="#4a4e4a" /><rect x="454.0" y="385.6" width="1.9" height="0.9" fill="#dfe2e4" /><rect x="439.6" y="395.3" width="1.1" height="1.1" fill="#7b807c" /><rect x="435.3" y="388.1" width="2.6" height="1.2" fill="#4a4e4a" /><rect x="438.7" y="394.6" width="1.3" height="1.7" fill="#dfe2e4" /><rect x="461.0" y="394.2" width="2.9" height="0.8" fill="#3e423e" /><rect x="464.9" y="392.9" width="2.2" height="2.4" fill="#7b807c" /><rect x="454.1" y="396.3" width="2.3" height="2.3" fill="#7b807c" /><rect x="436.7" y="384.0" width="7.3" height="5.6" fill="#3f5a35" /><rect x="439.6" y="388.8" width="5.1" height="3.4" fill="#4b663d" /><rect x="438.2" y="385.0" width="4.0" height="2.0" fill="#38502d" /><rect x="450.9" y="388.0" width="1.8" height="16.0" fill="#3f413e" /><rect x="440.7" y="390.0" width="1.2" height="13.0" fill="#555754" /><rect x="463.9" y="391.0" width="1.4" height="13.0" fill="#494b48" /><rect x="436.9" y="396.5" width="9.0" height="4.6" fill="#d5dbe2" /><rect x="452.9" y="397.0" width="8.0" height="4.0" fill="#bfc7d0" /><rect x="434.9" y="401.4" width="36.3" height="4.4" fill="#636762" /><rect x="442.1" y="401.6" width="1.2" height="2.6" fill="#8d918d" /><rect x="445.4" y="401.4" width="1.2" height="2.6" fill="#8d918d" /><rect x="469.4" y="404.2" width="1.2" height="2.6" fill="#30332f" /><rect x="443.0" y="404.3" width="1.2" height="2.6" fill="#8d918d" /><rect x="446.7" y="403.3" width="1.2" height="2.6" fill="#484b47" /><rect x="453.5" y="402.4" width="1.2" height="2.6" fill="#2a2c2a" /><rect x="457.3" y="403.5" width="1.2" height="2.6" fill="#2a2c2a" /><rect x="469.0" y="401.1" width="1.2" height="2.6" fill="#30332f" /><rect x="460.6" y="401.9" width="1.2" height="2.6" fill="#2a2c2a" /><rect x="452.5" y="403.7" width="1.2" height="2.6" fill="#2a2c2a" /><rect x="434.9" y="405.8" width="36.3" height="6.0" fill="#ada39a" /><rect x="438.5" y="408.4" width="18.1" height="3.0" fill="#b39a88" /><rect x="454.9" y="406.0" width="10.9" height="2.4" fill="#5c5f5b" /><rect x="471.2" y="384.0" width="36.3" height="15.0" fill="#7f8481" /><rect x="487.6" y="392.1" width="3.0" height="1.6" fill="#7b807c" /><rect x="477.9" y="391.4" width="2.4" height="2.2" fill="#6c716d" /><rect x="487.4" y="386.1" width="2.2" height="2.4" fill="#555a56" /><rect x="492.8" y="389.7" width="2.0" height="2.1" fill="#474b47" /><rect x="493.8" y="396.1" width="1.1" height="0.9" fill="#7b807c" /><rect x="493.0" y="395.3" width="1.7" height="1.9" fill="#7b807c" /><rect x="490.0" y="393.3" width="2.1" height="2.0" fill="#4a4e4a" /><rect x="495.0" y="389.9" width="2.2" height="2.5" fill="#6c716d" /><rect x="496.9" y="388.6" width="1.5" height="1.3" fill="#6c716d" /><rect x="491.6" y="385.6" width="1.2" height="1.3" fill="#6c716d" /><rect x="506.0" y="396.3" width="1.0" height="1.2" fill="#555a56" /><rect x="488.3" y="398.2" width="1.9" height="0.9" fill="#7b807c" /><rect x="499.5" y="387.9" width="1.2" height="1.4" fill="#3e423e" /><rect x="498.7" y="385.7" width="1.5" height="1.0" fill="#555a56" /><rect x="488.1" y="391.1" width="2.5" height="1.1" fill="#7b807c" /><rect x="507.0" y="395.2" width="0.5" height="1.5" fill="#3e423e" /><rect x="486.5" y="387.1" width="1.6" height="2.5" fill="#dfe2e4" /><rect x="507.4" y="384.3" width="0.1" height="2.6" fill="#6c716d" /><rect x="472.7" y="386.1" width="2.0" height="0.8" fill="#c2c6c9" /><rect x="501.3" y="389.6" width="1.2" height="1.2" fill="#7b807c" /><rect x="471.8" y="389.3" width="2.4" height="1.0" fill="#4a4e4a" /><rect x="501.4" y="386.0" width="1.8" height="1.9" fill="#dfe2e4" /><rect x="504.2" y="395.9" width="1.5" height="1.1" fill="#7b807c" /><rect x="496.1" y="389.6" width="2.1" height="0.9" fill="#555a56" /><rect x="475.0" y="384.6" width="3.1" height="1.2" fill="#3e423e" /><rect x="480.5" y="395.9" width="2.3" height="1.3" fill="#474b47" /><rect x="504.9" y="398.2" width="1.3" height="1.7" fill="#6c716d" /><rect x="481.4" y="397.3" width="1.4" height="0.8" fill="#dfe2e4" /><rect x="486.1" y="387.6" width="1.1" height="1.3" fill="#474b47" /><rect x="474.5" y="386.0" width="2.0" height="1.4" fill="#474b47" /><rect x="492.6" y="397.4" width="2.0" height="1.4" fill="#dfe2e4" /><rect x="506.1" y="384.3" width="1.4" height="1.7" fill="#dfe2e4" /><rect x="482.8" y="398.5" width="1.2" height="1.8" fill="#555a56" /><rect x="503.9" y="394.7" width="2.5" height="2.2" fill="#c2c6c9" /><rect x="484.0" y="393.9" width="3.0" height="2.4" fill="#3e423e" /><rect x="505.5" y="384.4" width="2.0" height="0.8" fill="#3e423e" /><rect x="485.0" y="384.2" width="1.2" height="1.0" fill="#6c716d" /><rect x="507.3" y="396.8" width="0.2" height="1.5" fill="#4a4e4a" /><rect x="487.2" y="396.2" width="1.2" height="2.2" fill="#555a56" /><rect x="482.5" y="385.3" width="1.0" height="2.5" fill="#6c716d" /><rect x="489.3" y="392.9" width="3.0" height="1.3" fill="#555a56" /><rect x="484.6" y="386.1" width="2.3" height="1.7" fill="#c2c6c9" /><rect x="495.2" y="390.4" width="3.0" height="1.4" fill="#dfe2e4" /><rect x="478.4" y="390.2" width="2.8" height="2.4" fill="#7b807c" /><rect x="485.2" y="392.5" width="1.7" height="1.0" fill="#4a4e4a" /><rect x="483.9" y="397.0" width="1.1" height="0.9" fill="#dfe2e4" /><rect x="501.0" y="385.6" width="2.0" height="2.5" fill="#3e423e" /><rect x="485.1" y="391.5" width="2.5" height="2.1" fill="#4a4e4a" /><rect x="482.8" y="396.0" width="1.6" height="1.9" fill="#dfe2e4" /><rect x="491.9" y="388.5" width="2.7" height="0.8" fill="#474b47" /><rect x="485.9" y="386.8" width="2.7" height="1.3" fill="#474b47" /><rect x="500.1" y="398.3" width="1.3" height="1.0" fill="#c2c6c9" /><rect x="506.0" y="393.9" width="1.4" height="1.7" fill="#474b47" /><rect x="497.1" y="394.9" width="2.2" height="0.9" fill="#7b807c" /><rect x="481.1" y="389.0" width="2.5" height="1.7" fill="#474b47" /><rect x="485.5" y="395.5" width="3.0" height="1.0" fill="#3e423e" /><rect x="475.9" y="390.6" width="2.4" height="2.4" fill="#3e423e" /><rect x="491.2" y="393.5" width="2.1" height="2.3" fill="#c2c6c9" /><rect x="488.0" y="393.4" width="1.5" height="2.1" fill="#6c716d" /><rect x="478.9" y="397.0" width="3.2" height="2.6" fill="#c2c6c9" /><rect x="480.7" y="394.4" width="1.0" height="1.7" fill="#555a56" /><rect x="487.2" y="392.0" width="2.7" height="1.7" fill="#555a56" /><rect x="479.1" y="396.6" width="1.9" height="0.9" fill="#c2c6c9" /><rect x="496.1" y="397.3" width="2.0" height="2.6" fill="#4a4e4a" /><rect x="505.5" y="391.1" width="2.0" height="1.0" fill="#7b807c" /><rect x="487.2" y="392.1" width="2.8" height="1.8" fill="#474b47" /><rect x="490.2" y="396.2" width="2.2" height="1.4" fill="#3e423e" /><rect x="505.9" y="396.6" width="1.6" height="1.3" fill="#474b47" /><rect x="506.4" y="391.6" width="1.1" height="1.2" fill="#6c716d" /><rect x="489.5" y="392.8" width="1.1" height="2.5" fill="#3e423e" /><rect x="490.9" y="398.3" width="1.3" height="1.0" fill="#474b47" /><rect x="473.6" y="391.8" width="1.9" height="2.5" fill="#3e423e" /><rect x="481.0" y="390.9" width="1.3" height="1.6" fill="#4a4e4a" /><rect x="490.3" y="385.6" width="1.9" height="0.9" fill="#dfe2e4" /><rect x="475.9" y="395.3" width="1.1" height="1.1" fill="#7b807c" /><rect x="471.6" y="388.1" width="2.6" height="1.2" fill="#4a4e4a" /><rect x="475.0" y="394.6" width="1.3" height="1.7" fill="#dfe2e4" /><rect x="497.3" y="394.2" width="2.9" height="0.8" fill="#3e423e" /><rect x="501.2" y="392.9" width="2.2" height="2.4" fill="#7b807c" /><rect x="490.4" y="396.3" width="2.3" height="2.3" fill="#7b807c" /><rect x="487.2" y="388.0" width="1.8" height="16.0" fill="#3f413e" /><rect x="477.0" y="390.0" width="1.2" height="13.0" fill="#555754" /><rect x="500.2" y="391.0" width="1.4" height="13.0" fill="#494b48" /><rect x="473.2" y="396.5" width="9.0" height="4.6" fill="#d5dbe2" /><rect x="489.2" y="397.0" width="8.0" height="4.0" fill="#bfc7d0" /><rect x="471.2" y="401.4" width="36.3" height="4.4" fill="#636762" /><rect x="471.6" y="401.9" width="1.2" height="2.6" fill="#8d918d" /><rect x="502.7" y="402.9" width="1.2" height="2.6" fill="#2a2c2a" /><rect x="504.9" y="403.0" width="1.2" height="2.6" fill="#30332f" /><rect x="493.4" y="403.8" width="1.2" height="2.6" fill="#30332f" /><rect x="490.3" y="403.3" width="1.2" height="2.6" fill="#30332f" /><rect x="484.6" y="404.3" width="1.2" height="2.6" fill="#2a2c2a" /><rect x="487.6" y="401.6" width="1.2" height="2.6" fill="#2a2c2a" /><rect x="490.1" y="403.1" width="1.2" height="2.6" fill="#2a2c2a" /><rect x="504.1" y="402.5" width="1.2" height="2.6" fill="#2a2c2a" /><rect x="492.0" y="402.3" width="1.2" height="2.6" fill="#8d918d" /><rect x="471.2" y="405.8" width="36.3" height="6.0" fill="#ada39a" /><rect x="474.8" y="408.4" width="18.1" height="3.0" fill="#b39a88" /><rect x="491.2" y="406.0" width="10.9" height="2.4" fill="#5c5f5b" /></g></g><rect x="329.4" y="394.2" width="1.3" height="6.4" fill="#f2f2f2" /><rect x="472.8" y="394.2" width="1.3" height="6.4" fill="#f2f2f2" />
<g clip-path="url(#c6)"><g filter="url(#tb)"><rect x="477.0" y="383.0" width="121.0" height="30.0" fill="#b5a55c" /><rect x="478.1" y="389.0" width="36.4" height="23.0" fill="#b9a95e" /><rect x="478.1" y="389.0" width="9.0" height="23.0" fill="#a89850" /><path d="M495.1 389 L504.1 389 L488.1 412 L481.1 412 Z" fill="#ece2ac"/><rect x="478.1" y="384.0" width="36.4" height="5.2" fill="#58a060" /><rect x="499.1" y="384.0" width="15.4" height="4.4" fill="#79c4b8" /><rect x="492.1" y="386.0" width="8.0" height="3.0" fill="#3f8a4a" /><rect x="482.5" y="384.5" width="8.4" height="2.8" fill="#d92f26" /><rect x="484.1" y="385.2" width="5.0" height="1.2" fill="#f4e0a0" /><ellipse cx="490.7" cy="391.6" rx="3.2" ry="2.4" fill="#b6402f" /><ellipse cx="493.6" cy="389.8" rx="1.6" ry="1.4" fill="#3f7a3a" /><ellipse cx="499.9" cy="392.6" rx="4.4" ry="3.0" fill="#86838c" /><ellipse cx="502.7" cy="390.4" rx="1.4" ry="1.2" fill="#e8e0d8" /><ellipse cx="498.1" cy="400.6" rx="3.2" ry="7.0" fill="#a6a3ad" transform="rotate(30 498.1 400.6)"/><ellipse cx="503.1" cy="405.6" rx="5.2" ry="3.2" fill="#8f8c97" /><ellipse cx="506.5" cy="401.4" rx="2.2" ry="3.6" fill="#cfcdd5" /><ellipse cx="495.1" cy="408.4" rx="3.4" ry="1.8" fill="#d8d6de" /><rect x="514.1" y="384.0" width="0.8" height="28.0" fill="#7d7444" /><rect x="514.5" y="389.0" width="36.4" height="23.0" fill="#b9a95e" /><rect x="514.5" y="389.0" width="9.0" height="23.0" fill="#a89850" /><path d="M531.5 389 L540.5 389 L524.5 412 L517.5 412 Z" fill="#ece2ac"/><rect x="514.5" y="384.0" width="36.4" height="5.2" fill="#58a060" /><rect x="535.5" y="384.0" width="15.4" height="4.4" fill="#79c4b8" /><rect x="528.5" y="386.0" width="8.0" height="3.0" fill="#3f8a4a" /><rect x="518.9" y="384.5" width="8.4" height="2.8" fill="#d92f26" /><rect x="520.5" y="385.2" width="5.0" height="1.2" fill="#f4e0a0" /><ellipse cx="527.1" cy="391.6" rx="3.2" ry="2.4" fill="#b6402f" /><ellipse cx="530.0" cy="389.8" rx="1.6" ry="1.4" fill="#3f7a3a" /><ellipse cx="536.3" cy="392.6" rx="4.4" ry="3.0" fill="#86838c" /><ellipse cx="539.1" cy="390.4" rx="1.4" ry="1.2" fill="#e8e0d8" /><ellipse cx="534.5" cy="400.6" rx="3.2" ry="7.0" fill="#a6a3ad" transform="rotate(30 534.5 400.6)"/><ellipse cx="539.5" cy="405.6" rx="5.2" ry="3.2" fill="#8f8c97" /><ellipse cx="542.9" cy="401.4" rx="2.2" ry="3.6" fill="#cfcdd5" /><ellipse cx="531.5" cy="408.4" rx="3.4" ry="1.8" fill="#d8d6de" /><rect x="550.5" y="384.0" width="0.8" height="28.0" fill="#7d7444" /><rect x="550.9" y="389.0" width="36.4" height="23.0" fill="#b9a95e" /><rect x="550.9" y="389.0" width="9.0" height="23.0" fill="#a89850" /><path d="M567.9 389 L576.9 389 L560.9 412 L553.9 412 Z" fill="#ece2ac"/><rect x="550.9" y="384.0" width="36.4" height="5.2" fill="#58a060" /><rect x="571.9" y="384.0" width="15.4" height="4.4" fill="#79c4b8" /><rect x="564.9" y="386.0" width="8.0" height="3.0" fill="#3f8a4a" /><rect x="555.3" y="384.5" width="8.4" height="2.8" fill="#d92f26" /><rect x="556.9" y="385.2" width="5.0" height="1.2" fill="#f4e0a0" /><ellipse cx="563.5" cy="391.6" rx="3.2" ry="2.4" fill="#b6402f" /><ellipse cx="566.4" cy="389.8" rx="1.6" ry="1.4" fill="#3f7a3a" /><ellipse cx="572.7" cy="392.6" rx="4.4" ry="3.0" fill="#86838c" /><ellipse cx="575.5" cy="390.4" rx="1.4" ry="1.2" fill="#e8e0d8" /><ellipse cx="570.9" cy="400.6" rx="3.2" ry="7.0" fill="#a6a3ad" transform="rotate(30 570.9 400.6)"/><ellipse cx="575.9" cy="405.6" rx="5.2" ry="3.2" fill="#8f8c97" /><ellipse cx="579.3" cy="401.4" rx="2.2" ry="3.6" fill="#cfcdd5" /><ellipse cx="567.9" cy="408.4" rx="3.4" ry="1.8" fill="#d8d6de" /><rect x="586.9" y="384.0" width="0.8" height="28.0" fill="#7d7444" /><rect x="587.3" y="389.0" width="36.4" height="23.0" fill="#b9a95e" /><rect x="587.3" y="389.0" width="9.0" height="23.0" fill="#a89850" /><path d="M604.3 389 L613.3 389 L597.3 412 L590.3 412 Z" fill="#ece2ac"/><rect x="587.3" y="384.0" width="36.4" height="5.2" fill="#58a060" /><rect x="608.3" y="384.0" width="15.4" height="4.4" fill="#79c4b8" /><rect x="601.3" y="386.0" width="8.0" height="3.0" fill="#3f8a4a" /><rect x="591.7" y="384.5" width="8.4" height="2.8" fill="#d92f26" /><rect x="593.3" y="385.2" width="5.0" height="1.2" fill="#f4e0a0" /><ellipse cx="599.9" cy="391.6" rx="3.2" ry="2.4" fill="#b6402f" /><ellipse cx="602.8" cy="389.8" rx="1.6" ry="1.4" fill="#3f7a3a" /><ellipse cx="609.1" cy="392.6" rx="4.4" ry="3.0" fill="#86838c" /><ellipse cx="611.9" cy="390.4" rx="1.4" ry="1.2" fill="#e8e0d8" /><ellipse cx="607.3" cy="400.6" rx="3.2" ry="7.0" fill="#a6a3ad" transform="rotate(30 607.3 400.6)"/><ellipse cx="612.3" cy="405.6" rx="5.2" ry="3.2" fill="#8f8c97" /><ellipse cx="615.7" cy="401.4" rx="2.2" ry="3.6" fill="#cfcdd5" /><ellipse cx="604.3" cy="408.4" rx="3.4" ry="1.8" fill="#d8d6de" /><rect x="623.3" y="384.0" width="0.8" height="28.0" fill="#7d7444" /></g></g><rect x="481.4" y="394.2" width="1.4" height="6.4" fill="#f6f6f6" /><rect x="591.8" y="394.2" width="1.4" height="6.4" fill="#f6f6f6" />
<g clip-path="url(#c7)"><g filter="url(#tb)"><rect x="595.0" y="383.0" width="101.0" height="30.0" fill="#2c6fdb" /><rect x="595.0" y="383.0" width="101.0" height="5.0" fill="#2a5fc6" /><ellipse cx="619.0" cy="400.6" rx="3.4" ry="3.5" fill="#f6d71e" /><ellipse cx="628.6" cy="398.6" rx="3.5" ry="3.6" fill="#f4cd1a" /><ellipse cx="624.4" cy="403.6" rx="3.7" ry="3.8" fill="#e83d8b" /><ellipse cx="630.2" cy="408.4" rx="3.4" ry="3.4" fill="#dba616" /><ellipse cx="622.2" cy="409.6" rx="2.8" ry="2.8" fill="#5b4fd2" /><rect x="599.6" y="385.5" width="1.3" height="1.3" fill="#e85aa0" /><rect x="608.6" y="386.5" width="1.3" height="1.3" fill="#f0d040" /><rect x="616.6" y="385.0" width="1.3" height="1.3" fill="#9a6ae0" /><rect x="625.6" y="386.0" width="1.3" height="1.3" fill="#e85aa0" /><rect x="604.6" y="389.0" width="1.3" height="1.3" fill="#8a5ae0" /><rect x="629.6" y="388.0" width="1.3" height="1.3" fill="#f0d040" /><rect x="612.6" y="388.4" width="1.3" height="1.3" fill="#7a4ad0" /><ellipse cx="655.4" cy="400.6" rx="3.4" ry="3.5" fill="#f6d71e" /><ellipse cx="665.0" cy="398.6" rx="3.5" ry="3.6" fill="#f4cd1a" /><ellipse cx="660.8" cy="403.6" rx="3.7" ry="3.8" fill="#e83d8b" /><ellipse cx="666.6" cy="408.4" rx="3.4" ry="3.4" fill="#dba616" /><ellipse cx="658.6" cy="409.6" rx="2.8" ry="2.8" fill="#5b4fd2" /><rect x="636.0" y="385.5" width="1.3" height="1.3" fill="#e85aa0" /><rect x="645.0" y="386.5" width="1.3" height="1.3" fill="#f0d040" /><rect x="653.0" y="385.0" width="1.3" height="1.3" fill="#9a6ae0" /><rect x="662.0" y="386.0" width="1.3" height="1.3" fill="#e85aa0" /><rect x="641.0" y="389.0" width="1.3" height="1.3" fill="#8a5ae0" /><rect x="666.0" y="388.0" width="1.3" height="1.3" fill="#f0d040" /><rect x="649.0" y="388.4" width="1.3" height="1.3" fill="#7a4ad0" /><ellipse cx="691.8" cy="400.6" rx="3.4" ry="3.5" fill="#f6d71e" /><ellipse cx="701.4" cy="398.6" rx="3.5" ry="3.6" fill="#f4cd1a" /><ellipse cx="697.2" cy="403.6" rx="3.7" ry="3.8" fill="#e83d8b" /><ellipse cx="703.0" cy="408.4" rx="3.4" ry="3.4" fill="#dba616" /><ellipse cx="695.0" cy="409.6" rx="2.8" ry="2.8" fill="#5b4fd2" /><rect x="672.4" y="385.5" width="1.3" height="1.3" fill="#e85aa0" /><rect x="681.4" y="386.5" width="1.3" height="1.3" fill="#f0d040" /><rect x="689.4" y="385.0" width="1.3" height="1.3" fill="#9a6ae0" /><rect x="698.4" y="386.0" width="1.3" height="1.3" fill="#e85aa0" /><rect x="677.4" y="389.0" width="1.3" height="1.3" fill="#8a5ae0" /><rect x="702.4" y="388.0" width="1.3" height="1.3" fill="#f0d040" /><rect x="685.4" y="388.4" width="1.3" height="1.3" fill="#7a4ad0" /></g><text x="594.1" y="396.6" font-family="Liberation Serif, serif" font-style="italic" font-weight="bold" font-size="10" fill="#d4e4fb" textLength="36" lengthAdjust="spacingAndGlyphs">Celebration</text><text x="630.5" y="396.6" font-family="Liberation Serif, serif" font-style="italic" font-weight="bold" font-size="10" fill="#d4e4fb" textLength="36" lengthAdjust="spacingAndGlyphs">Celebration</text><text x="666.9" y="396.6" font-family="Liberation Serif, serif" font-style="italic" font-weight="bold" font-size="10" fill="#d4e4fb" textLength="36" lengthAdjust="spacingAndGlyphs">Celebration</text></g><rect x="599.4" y="394.2" width="1.4" height="6.4" fill="#f6f6f6" /><rect x="690.4" y="394.2" width="1.4" height="6.4" fill="#f6f6f6" />
<g clip-path="url(#c8)"><g filter="url(#tb)"><rect x="694.0" y="383.0" width="70.0" height="30.0" fill="#efc02e" /><rect x="695.3" y="384.0" width="36.4" height="4.4" fill="#c2c42a" /><rect x="705.3" y="384.0" width="6.0" height="3.4" fill="#7aa018" /><rect x="713.3" y="384.0" width="8.0" height="3.0" fill="#b08a30" /><rect x="695.3" y="389.0" width="5.4" height="12.0" fill="#f29a12" /><rect x="695.3" y="401.0" width="36.4" height="5.0" fill="#d8862a" /><rect x="695.3" y="406.0" width="36.4" height="6.0" fill="#a8402c" /><rect x="699.3" y="407.0" width="6.0" height="4.0" fill="#e8b830" /><rect x="719.3" y="407.0" width="8.0" height="4.0" fill="#5a6070" /><rect x="726.3" y="388.0" width="5.4" height="20.0" fill="#5a4030" /><rect x="726.9" y="392.0" width="4.0" height="6.0" fill="#8a3a28" /><rect x="700.9" y="388.4" width="25.2" height="18.0" fill="#f6f6f6" /><rect x="703.7" y="390.6" width="1.5" height="3.2" fill="#7a7a7a" /><rect x="706.6" y="390.6" width="1.5" height="3.2" fill="#7a7a7a" /><rect x="709.5" y="390.6" width="1.5" height="3.2" fill="#7a7a7a" /><rect x="712.4" y="390.6" width="1.5" height="3.2" fill="#7a7a7a" /><rect x="715.3" y="390.6" width="1.5" height="3.2" fill="#7a7a7a" /><rect x="718.2" y="390.6" width="1.5" height="3.2" fill="#7a7a7a" /><rect x="721.1" y="390.6" width="1.5" height="3.2" fill="#7a7a7a" /><rect x="703.7" y="396.0" width="1.5" height="3.2" fill="#7a7a7a" /><rect x="706.6" y="396.0" width="1.5" height="3.2" fill="#7a7a7a" /><rect x="709.5" y="396.0" width="1.5" height="3.2" fill="#7a7a7a" /><rect x="712.4" y="396.0" width="1.5" height="3.2" fill="#7a7a7a" /><rect x="715.3" y="396.0" width="1.5" height="3.2" fill="#7a7a7a" /><rect x="718.2" y="396.0" width="1.5" height="3.2" fill="#7a7a7a" /><rect x="721.1" y="396.0" width="1.5" height="3.2" fill="#7a7a7a" /><rect x="703.7" y="401.4" width="1.5" height="3.2" fill="#7a7a7a" /><rect x="706.6" y="401.4" width="1.5" height="3.2" fill="#7a7a7a" /><rect x="709.5" y="401.4" width="1.5" height="3.2" fill="#7a7a7a" /><rect x="712.4" y="401.4" width="1.5" height="3.2" fill="#7a7a7a" /><rect x="715.3" y="401.4" width="1.5" height="3.2" fill="#7a7a7a" /><rect x="718.2" y="401.4" width="1.5" height="3.2" fill="#7a7a7a" /><rect x="721.1" y="401.4" width="1.5" height="3.2" fill="#7a7a7a" /><rect x="731.7" y="384.0" width="36.4" height="4.4" fill="#c2c42a" /><rect x="741.7" y="384.0" width="6.0" height="3.4" fill="#7aa018" /><rect x="749.7" y="384.0" width="8.0" height="3.0" fill="#b08a30" /><rect x="731.7" y="389.0" width="5.4" height="12.0" fill="#f29a12" /><rect x="731.7" y="401.0" width="36.4" height="5.0" fill="#d8862a" /><rect x="731.7" y="406.0" width="36.4" height="6.0" fill="#a8402c" /><rect x="735.7" y="407.0" width="6.0" height="4.0" fill="#e8b830" /><rect x="755.7" y="407.0" width="8.0" height="4.0" fill="#5a6070" /><rect x="762.7" y="388.0" width="5.4" height="20.0" fill="#5a4030" /><rect x="763.3" y="392.0" width="4.0" height="6.0" fill="#8a3a28" /><rect x="737.3" y="388.4" width="25.2" height="18.0" fill="#f6f6f6" /><rect x="740.1" y="390.6" width="1.5" height="3.2" fill="#7a7a7a" /><rect x="743.0" y="390.6" width="1.5" height="3.2" fill="#7a7a7a" /><rect x="745.9" y="390.6" width="1.5" height="3.2" fill="#7a7a7a" /><rect x="748.8" y="390.6" width="1.5" height="3.2" fill="#7a7a7a" /><rect x="751.7" y="390.6" width="1.5" height="3.2" fill="#7a7a7a" /><rect x="754.6" y="390.6" width="1.5" height="3.2" fill="#7a7a7a" /><rect x="757.5" y="390.6" width="1.5" height="3.2" fill="#7a7a7a" /><rect x="740.1" y="396.0" width="1.5" height="3.2" fill="#7a7a7a" /><rect x="743.0" y="396.0" width="1.5" height="3.2" fill="#7a7a7a" /><rect x="745.9" y="396.0" width="1.5" height="3.2" fill="#7a7a7a" /><rect x="748.8" y="396.0" width="1.5" height="3.2" fill="#7a7a7a" /><rect x="751.7" y="396.0" width="1.5" height="3.2" fill="#7a7a7a" /><rect x="754.6" y="396.0" width="1.5" height="3.2" fill="#7a7a7a" /><rect x="757.5" y="396.0" width="1.5" height="3.2" fill="#7a7a7a" /><rect x="740.1" y="401.4" width="1.5" height="3.2" fill="#7a7a7a" /><rect x="743.0" y="401.4" width="1.5" height="3.2" fill="#7a7a7a" /><rect x="745.9" y="401.4" width="1.5" height="3.2" fill="#7a7a7a" /><rect x="748.8" y="401.4" width="1.5" height="3.2" fill="#7a7a7a" /><rect x="751.7" y="401.4" width="1.5" height="3.2" fill="#7a7a7a" /><rect x="754.6" y="401.4" width="1.5" height="3.2" fill="#7a7a7a" /><rect x="757.5" y="401.4" width="1.5" height="3.2" fill="#7a7a7a" /></g></g><rect x="698.2" y="394.2" width="1.5" height="6.4" fill="#f6f6f6" />
<rect x="576.6" y="391.6" width="11.6" height="11.8" rx="2" fill="#262a33"/><path d="M577.9 394.2 L582.9 397.5 L577.9 400.8 Z M586.9 394.2 L581.9 397.5 L586.9 400.8 Z" fill="#fff"/><rect x="604.2" y="391.6" width="11.6" height="11.8" rx="2" fill="#262a33"/><path d="M605.5 394.2 L610.5 397.5 L605.5 400.8 Z M614.5 394.2 L609.5 397.5 L614.5 400.8 Z" fill="#fff"/><rect x="675.5" y="391.6" width="11.6" height="11.8" rx="2" fill="#262a33"/><path d="M676.8 394.2 L681.8 397.5 L676.8 400.8 Z M685.8 394.2 L680.8 397.5 L685.8 400.8 Z" fill="#fff"/><rect x="703.1" y="391.6" width="11.6" height="11.8" rx="2" fill="#262a33"/><path d="M704.4 394.2 L709.4 397.5 L704.4 400.8 Z M713.4 394.2 L708.4 397.5 L713.4 400.8 Z" fill="#fff"/></svg>
<!-- playhead -->
<div class="a" style="left:132.4px;top:336px;width:1.2px;height:113px;background:#f4f4f4"></div>
<svg style="left:129.8px;top:328.6px" width="6.4" height="9" viewBox="0 0 6.4 9"><path d="M0.4 0.4 H6 V5.6 L3.2 8.6 L0.4 5.6 Z" fill="#fff"/></svg>


<!-- context menu -->
<div class="a" style="left:135px;top:261px;width:126.6px;height:195px;background:#111;border:1px solid #2c2c2c;border-radius:2px;box-shadow:0 0 3px rgba(0,0,0,0.6)"></div>
<div class="a" style="left:135.6px;top:310.9px;width:126.2px;height:14.4px;background:#0a7fe6"></div>
<div class="sep" style="top:307.3px"></div>
<div class="sep" style="top:329.4px"></div>
<div class="sep" style="top:347.4px"></div>
<div class="sep" style="top:380.6px"></div>
<div class="sep" style="top:414px"></div>
<div class="mi" id="m1" style="left:141.8px;letter-spacing:-0.077px;top:268.10px">Cut</div><div class="mk" id="k1" style="left:233.5px;letter-spacing:-0.143px;top:268.30px">Ctrl+X</div>
<div class="mi" id="m2" style="left:141.8px;letter-spacing:-0.124px;top:281.20px">Copy</div><div class="mk" id="k2" style="left:232.8px;letter-spacing:-0.096px;top:281.40px">Ctrl+C</div>
<div class="mi dis" id="m3" style="left:141.8px;letter-spacing:-0.196px;top:295.50px">Paste</div><div class="mk" id="k3" style="left:233.5px;letter-spacing:-0.143px;top:295.70px">Ctrl+V</div>
<div class="mi" id="m4" style="left:141.8px;letter-spacing:-0.176px;top:314.90px;color:#fff">Replace</div>
<div class="mi dis" id="m5" style="left:141.8px;letter-spacing:-0.106px;top:334.70px">Select Suggested Similar Layers</div>
<div class="mi" id="m6" style="left:141.8px;letter-spacing:0.013px;top:354.75px">Copy Properties</div><div class="mk" id="k6" style="left:219.0px;letter-spacing:-0.061px;top:354.95px">Ctrl+Alt+C</div>
<div class="mi dis" id="m7" style="left:141.8px;letter-spacing:-0.019px;top:368.40px">Paste Properties</div><div class="mk" id="k7" style="left:219.0px;letter-spacing:-0.017px;top:368.60px">Ctrl+Alt+V</div>
<div class="mi" id="m8" style="left:141.8px;letter-spacing:0.006px;top:388.40px">Delete</div><div class="mk" id="k8" style="left:243.3px;letter-spacing:-0.115px;top:388.60px">Del</div>
<div class="mi" id="m9" style="left:141.8px;letter-spacing:-0.055px;top:401.10px">Ripple Delete</div><div class="mk" id="k9" style="left:226.0px;letter-spacing:0.008px;top:401.30px">Ctrl+Del</div>
<div class="mi" id="m10" style="left:141.8px;letter-spacing:0.029px;top:420.90px">Split</div><div class="mk" id="k10" style="left:250px;top:421.10px">S</div>
<div class="mi" id="m11" style="left:141.8px;letter-spacing:-0.016px;top:434.50px">Hide</div><div class="mk" id="k11" style="left:249.0px;letter-spacing:0.097px;top:434.70px">H</div>
<div class="mi dis" id="m12" style="left:141.8px;letter-spacing:-0.028px;top:446.3px">Group into Scene</div><div class="mk" id="k12" style="left:212.0px;letter-spacing:0.094px;top:446.3px;color:#444">Ctrl+Shift+L</div>
<!-- red arrow -->
<svg style="left:160px;top:305px" width="80" height="80" viewBox="160 305 80 80"><path d="M214.6 372.8 L187.6 333" stroke="#e21a22" stroke-width="3.3" stroke-linecap="butt"/><path d="M178.6 321.6 L194.2 329 L181 335.6 Z" fill="#e21a22"/></svg>
<!-- cursor -->
<svg style="left:175.6px;top:317.4px" width="4" height="6" viewBox="0 0 4 6"><path d="M1.2 0.4 V4 M1.2 2.4 H3.2 V5.2 H0.8 L0.4 3.6" fill="#eee" stroke="#eee" stroke-width="0.55"/></svg>

</div>
</body></html>
